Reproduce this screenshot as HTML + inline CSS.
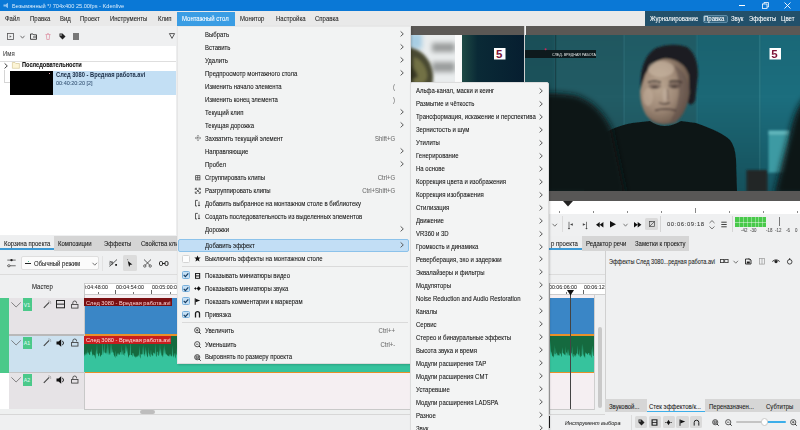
<!DOCTYPE html>
<html><head><meta charset="utf-8">
<style>
*{box-sizing:border-box;margin:0;padding:0}
html,body{width:800px;height:430px;overflow:hidden;background:#eff0f1;font-family:"Liberation Sans",sans-serif;font-size:6px;color:#1f1f1f}
.a{position:absolute}
.t{position:absolute;white-space:nowrap;line-height:8px;height:8px;-webkit-text-stroke:0.08px currentColor}
.m{font-family:"Liberation Mono",monospace}
svg{position:absolute;overflow:visible}
</style></head><body>

<div class="a" style="left:0px;top:0px;width:800px;height:11px;background:#0a78d6"></div>
<svg style="left:3px;top:2px;" width="6" height="7" viewBox="0 0 6 7"><path d="M5 0.8 L1.2 3.5 L5 6.2 Z" fill="#8ec2f0"/><rect x="0.5" y="2.5" width="1.6" height="2" fill="#8ec2f0"/></svg>
<div class="t" style="left:12px;top:2.21px;font-size:6.21px;transform:scaleX(0.91);transform-origin:0 0;color:#dcedfb;-webkit-text-stroke:0">Безымянный */ 704x400 25.00fps - Kdenlive</div>
<div class="a" style="left:739px;top:5px;width:6px;height:0.8px;background:#fff"></div>
<svg style="left:761.5px;top:2px;" width="7" height="7" viewBox="0 0 7 7"><rect x="0.5" y="2" width="4.5" height="4.5" fill="none" stroke="#fff" stroke-width="0.8"/><path d="M2 2 V0.5 H6.5 V5 H5" fill="none" stroke="#fff" stroke-width="0.8"/></svg>
<svg style="left:784px;top:2px;" width="7" height="7" viewBox="0 0 7 7"><path d="M0.5 0.5L6.5 6.5M6.5 0.5L0.5 6.5" stroke="#fff" stroke-width="0.9"/></svg>
<div class="a" style="left:0px;top:11px;width:645px;height:15px;background:#e9e9e9"></div>
<div class="a" style="left:645px;top:11px;width:155px;height:15px;background:#22506a"></div>
<div class="t" style="left:5px;top:15.02px;font-size:6.59px;transform:scaleX(0.91);transform-origin:0 0;">Файл</div>
<div class="t" style="left:29.7px;top:15.02px;font-size:6.59px;transform:scaleX(0.91);transform-origin:0 0;">Правка</div>
<div class="t" style="left:59.7px;top:15.02px;font-size:6.59px;transform:scaleX(0.91);transform-origin:0 0;">Вид</div>
<div class="t" style="left:80px;top:15.02px;font-size:6.59px;transform:scaleX(0.91);transform-origin:0 0;">Проект</div>
<div class="t" style="left:109.7px;top:15.02px;font-size:6.59px;transform:scaleX(0.91);transform-origin:0 0;">Инструменты</div>
<div class="t" style="left:157.7px;top:15.02px;font-size:6.59px;transform:scaleX(0.91);transform-origin:0 0;">Клип</div>
<div class="t" style="left:240.3px;top:15.02px;font-size:6.59px;transform:scaleX(0.91);transform-origin:0 0;">Монитор</div>
<div class="t" style="left:275.6px;top:15.02px;font-size:6.59px;transform:scaleX(0.91);transform-origin:0 0;">Настройка</div>
<div class="t" style="left:314.6px;top:15.02px;font-size:6.59px;transform:scaleX(0.91);transform-origin:0 0;">Справка</div>
<div class="a" style="left:176.5px;top:12px;width:58px;height:14px;background:#3a9de4"></div>
<div class="t" style="left:182px;top:15.02px;font-size:6.59px;transform:scaleX(0.91);transform-origin:0 0;color:#fff">Монтажный стол</div>
<div class="t" style="left:650px;top:15.02px;font-size:6.59px;transform:scaleX(0.91);transform-origin:0 0;color:#fff">Журналирование</div>
<div class="a" style="left:703px;top:14.8px;width:24.5px;height:8.2px;background:#35647e;border:0.7px solid #5d8ca6;border-radius:2px"></div>
<div class="t" style="left:704px;top:15.02px;font-size:6.59px;transform:scaleX(0.91);transform-origin:0 0;color:#fff">Правка</div>
<div class="t" style="left:731px;top:15.02px;font-size:6.59px;transform:scaleX(0.91);transform-origin:0 0;color:#fff">Звук</div>
<div class="t" style="left:749px;top:15.02px;font-size:6.59px;transform:scaleX(0.91);transform-origin:0 0;color:#fff">Эффекты</div>
<div class="t" style="left:781px;top:15.02px;font-size:6.59px;transform:scaleX(0.91);transform-origin:0 0;color:#fff">Цвет</div>
<div class="a" style="left:0px;top:26px;width:176px;height:20px;background:#eff0f1"></div>
<svg style="left:7px;top:33px;" width="7" height="7" viewBox="0 0 7 7"><rect x="0.5" y="0.5" width="6" height="6" fill="none" stroke="#555" stroke-width="0.8"/><path d="M2.6 2.2 V4.8 L4.6 3.5 Z" fill="#666"/></svg>
<svg style="left:19.5px;top:34.5px;" width="5" height="4" viewBox="0 0 5 4"><path d="M0.5 0.8 L2.5 3.2 L4.5 0.8" fill="none" stroke="#555" stroke-width="0.8"/></svg>
<svg style="left:30px;top:33px;" width="7" height="7" viewBox="0 0 7 7"><path d="M0.5 1 H3 L3.8 1.8 H6.5 V6.3 H0.5 Z" fill="none" stroke="#333" stroke-width="0.9"/><path d="M3 4 H6" stroke="#333" stroke-width="0.9"/></svg>
<svg style="left:45px;top:33px;" width="6" height="7" viewBox="0 0 6 7"><path d="M0.5 1.5 H5.5 M1.3 1.5 L1.8 6.5 H4.2 L4.7 1.5 M2.2 0.5 H3.8" fill="none" stroke="#dd8ea0" stroke-width="0.7"/></svg>
<svg style="left:59px;top:33px;" width="7" height="7" viewBox="0 0 7 7"><path d="M0.5 0.5 H3.5 L6.5 3.5 L3.5 6.5 L0.5 3.5 Z" fill="#222"/><circle cx="2" cy="2" r="0.7" fill="#fff"/></svg>
<div class="a" style="left:73px;top:33px;width:6px;height:7px;background:#777"></div>
<svg style="left:168.5px;top:33px;" width="6" height="6" viewBox="0 0 6 6"><path d="M0.4 0.6 H5.6 L3 5.4 Z" fill="none" stroke="#333" stroke-width="0.8" stroke-linejoin="round"/></svg>
<div class="a" style="left:0px;top:46px;width:176px;height:189px;background:#fff"></div>
<div class="t" style="left:3px;top:50.02px;font-size:6.59px;transform:scaleX(0.91);transform-origin:0 0;color:#444">Имя</div>
<div class="a" style="left:0px;top:60.5px;width:176px;height:0.8px;background:#dedede"></div>
<svg style="left:3.5px;top:62.5px;" width="4" height="6" viewBox="0 0 4 6"><path d="M0.6 0.4 L3.3 2.9 L0.6 5.4" fill="none" stroke="#444" stroke-width="1"/></svg>
<svg style="left:11.5px;top:61.8px;" width="8" height="7" viewBox="0 0 8 7"><path d="M0.4 0.5 H3 L3.8 1.5 H7.4 V6.3 H0.4 Z" fill="#fdf5d6" stroke="#cfc08a" stroke-width="0.6"/></svg>
<div class="t" style="left:21.5px;top:61.43px;font-size:6.89px;transform:scaleX(0.82);transform-origin:0 0;font-weight:bold;color:#111;-webkit-text-stroke:0.1px #111">Последовательности</div>
<div class="a" style="left:4px;top:70px;width:0.8px;height:12px;background:#d5d5d5"></div>
<div class="a" style="left:4px;top:82px;width:6px;height:0.8px;background:#d5d5d5"></div>
<div class="a" style="left:10px;top:70.7px;width:43.2px;height:24.5px;background:#000"></div>
<div class="a" style="left:49px;top:72.5px;width:1.2px;height:1.2px;background:#e8a0b0"></div>
<div class="a" style="left:53.2px;top:70.7px;width:122.8px;height:24.5px;background:#c3dff4"></div>
<div class="t" style="left:55.5px;top:71.24px;font-size:7.01px;transform:scaleX(0.82);transform-origin:0 0;font-weight:bold;color:#1b2d45;-webkit-text-stroke:0">След 3080 - Вредная работа.avi</div>
<div class="t" style="left:55.5px;top:79.21px;font-size:6.04px;transform:scaleX(0.91);transform-origin:0 0;color:#3a5878">00:40:20:20 [2]</div>
<div class="a" style="left:176px;top:26px;width:234px;height:209px;background:#eff0f1"></div>
<div class="a" style="left:410px;top:26px;width:114px;height:9px;background:#5b5855"></div>
<div class="a" style="left:526px;top:26px;width:274px;height:9px;background:#5b5855"></div>
<svg style="left:410px;top:35px;overflow:hidden" width="114" height="156" viewBox="0 0 114 156">
<defs>
<filter id="b1" x="-50%" y="-50%" width="200%" height="200%"><feGaussianBlur stdDeviation="1.5"/></filter>
<filter id="b2" x="-50%" y="-50%" width="200%" height="200%"><feGaussianBlur stdDeviation="2.5"/></filter>
<linearGradient id="cg1" x1="0" x2="1" y1="0" y2="0"><stop offset="0" stop-color="#1f4a45"/><stop offset="0.25" stop-color="#0a2a36"/><stop offset="1" stop-color="#061e30"/></linearGradient>
</defs>
<rect x="0" y="0" width="114" height="156" fill="#061e30"/>
<rect x="52" y="0" width="62" height="156" fill="url(#cg1)"/>
<rect x="0" y="0" width="52" height="156" fill="#e9eced"/>
<g filter="url(#b2)">
<rect x="22" y="8" width="23" height="9" fill="#9a9c9c"/>
<rect x="22" y="27" width="23" height="10" fill="#9a9c9c"/>
<rect x="22" y="55" width="23" height="10" fill="#9a9c9c"/>
<rect x="-2" y="-2" width="14" height="16" fill="#a7cde3"/>
</g>
<rect x="45" y="0" width="7" height="156" fill="#fbfbfb"/>
<g filter="url(#b1)">
<path d="M-4 12 Q12 13 20 28 Q25 40 22 50 L-4 50 Z" fill="#4a4a30"/>
<path d="M4 22 Q14 26 17 38 Q18 46 12 48 L4 48 Z" fill="#7c7a4a" opacity="0.8"/>
<path d="M-2 30 Q6 32 8 42 L-2 46 Z" fill="#2e2e1e" opacity="0.8"/>
</g>
<rect x="84" y="13" width="11.5" height="11.5" fill="#fff"/>
<text x="86" y="23" font-family="Liberation Sans" font-weight="bold" font-size="11.5" fill="#7d1438">5</text>
</svg>
<svg style="left:524px;top:35px;overflow:hidden" width="276" height="156" viewBox="0 0 276 156">
<defs>
<filter id="f05" x="-50%" y="-50%" width="200%" height="200%"><feGaussianBlur stdDeviation="0.5"/></filter>
<filter id="f1" x="-50%" y="-50%" width="200%" height="200%"><feGaussianBlur stdDeviation="1.1"/></filter>
<filter id="f2" x="-50%" y="-50%" width="200%" height="200%"><feGaussianBlur stdDeviation="1.6"/></filter>
<filter id="f3" x="-50%" y="-50%" width="200%" height="200%"><feGaussianBlur stdDeviation="3"/></filter>
<filter id="f6" x="-50%" y="-50%" width="200%" height="200%"><feGaussianBlur stdDeviation="5"/></filter>
<linearGradient id="bgv" x1="0" x2="0" y1="0" y2="1"><stop offset="0" stop-color="#000" stop-opacity="0.05"/><stop offset="0.4" stop-color="#000" stop-opacity="0"/><stop offset="1" stop-color="#000" stop-opacity="0.22"/></linearGradient>
<radialGradient id="face" cx="0.38" cy="0.42" r="0.7"><stop offset="0" stop-color="#bba792"/><stop offset="0.5" stop-color="#a08a78"/><stop offset="0.85" stop-color="#736052"/><stop offset="1" stop-color="#4c423b"/></radialGradient>
</defs>
<rect width="276" height="156" fill="#235e68"/>
<g filter="url(#f2)">
<rect x="-5" y="-5" width="35" height="170" fill="#1f525b"/>
<rect x="30" y="-5" width="70" height="170" fill="#225b65"/>
<rect x="100" y="-5" width="73" height="170" fill="#22606b"/>
<rect x="173" y="-5" width="63" height="170" fill="#1d6776"/>
<rect x="236" y="-5" width="45" height="170" fill="#1f6e7e"/>
</g>
<g filter="url(#f05)">
<rect x="99.5" y="0" width="1.2" height="156" fill="#2d737c" opacity="0.8"/>
<rect x="172.5" y="0" width="1.2" height="156" fill="#2a7480" opacity="0.8"/>
<rect x="235" y="0" width="1.5" height="156" fill="#2c7a86" opacity="0.9"/>
<rect x="31" y="0" width="1.2" height="156" fill="#173f46" opacity="0.8"/>
</g>
<rect width="276" height="156" fill="url(#bgv)"/>
<g filter="url(#f1)">
<path d="M117 58 Q114 24 132 13 Q148 7 163 12 Q174 20 174 40 L171 66 Q167 72 164 68 L163 42 Q158 28 142 26 Q128 28 122 42 L121 60 Z" fill="#1b1f21"/>
<path d="M121 40 Q128 25 142 23.5 Q160 25 165 40 L165.5 58 Q163.5 74 156 83 Q148 90 139 89.5 Q128 88 122 80 Q116 70 116 56 Z" fill="url(#face)"/>
<path d="M150 30 Q165 38 165.5 58 Q163.5 74 156 83 Q150 88 145 89 Q156 70 155 50 Q154 38 150 30 Z" fill="#5e4e48" opacity="0.55"/>
<ellipse cx="137" cy="34" rx="13" ry="8" fill="#cdbba8" opacity="0.55"/>
<ellipse cx="124" cy="62" rx="5" ry="9" fill="#c6b19e" opacity="0.5"/>
<ellipse cx="141" cy="60" rx="2.5" ry="7" fill="#c9b7a8" opacity="0.5"/>
<ellipse cx="131" cy="51" rx="6.5" ry="3.2" fill="#5a4843" opacity="0.45"/>
<ellipse cx="150.5" cy="50.5" rx="6.5" ry="3.2" fill="#4e3e3a" opacity="0.5"/>
<path d="M124 47.5 Q130.5 44.5 137 47.5" fill="none" stroke="#2f2725" stroke-width="1.5"/>
<path d="M145 47 Q151 44.5 158 47.5" fill="none" stroke="#2f2725" stroke-width="1.5"/>
<path d="M127 52 Q131 50.5 135 52 Q131 53.6 127 52.3 Z" fill="#2e2422"/>
<path d="M146.5 51.5 Q150.5 50 154.5 51.5 Q150.5 53.3 146.5 51.8 Z" fill="#2e2422"/>
<path d="M143.5 54 L144 65" fill="none" stroke="#6a5650" stroke-width="1.2" opacity="0.7"/>
<path d="M135 67.5 Q140 70.5 146 67.5" fill="none" stroke="#4e3e3a" stroke-width="1.4" opacity="0.9"/>
<path d="M131 75.5 Q141 72.5 152 75.5" fill="none" stroke="#453632" stroke-width="1.6"/>
<path d="M125 82 Q139 92 155 82 L153 89 L127 89 Z" fill="#6a5a53" opacity="0.45"/>
</g>
<g filter="url(#f05)">
<path d="M60 156 L66 112 Q80 93 108 88 L126 86 Q140 96 157 86 L172 88 Q198 97 206 105 Q211 111 212 124 L213 156 Z" fill="#0f1818"/>
</g>
<g filter="url(#f1)">
<rect x="244.5" y="95.6" width="21" height="42" fill="#3c9aa3"/>
<rect x="244.5" y="95.6" width="21" height="4" fill="#62b6bc"/>
<rect x="222.5" y="135" width="21" height="22" fill="#242727"/>
</g>
<g filter="url(#f3)">
<path d="M-12 160 L-12 62 Q20 55 50 60 Q74 66 88 94 L102 160 Z" fill="#0b1313"/>
</g>
<g filter="url(#f3)">
<path d="M290 55 Q272 66 266 98 L260 120 L250 160 L290 160 Z" fill="#0b1313"/>
</g>
<rect x="1" y="15" width="71" height="8" fill="#0d1618" opacity="0.92"/>
<circle cx="21.6" cy="14.2" r="1" fill="#c8285a"/>
<text x="28" y="21" font-family="Liberation Sans" font-size="3.6" fill="#e6e9e9">СЛЕД. ВРЕДНАЯ РАБОТА</text>
<rect x="245.5" y="13" width="11.5" height="11.5" fill="#fff"/>
<text x="247.3" y="23.2" font-family="Liberation Sans" font-weight="bold" font-size="11.5" fill="#7d1438">5</text>
</svg>
<div class="a" style="left:523.7px;top:26px;width:1.8px;height:165px;background:#cfcfcf"></div>
<div class="a" style="left:410px;top:191px;width:390px;height:10px;background:#585756"></div>
<div class="a" style="left:410px;top:201px;width:390px;height:13px;background:#fff"></div>
<svg style="left:562.5px;top:201px;" width="10" height="6" viewBox="0 0 10 6"><path d="M0 0 H10 L5 5.5 Z" fill="#222"/></svg>
<div class="a" style="left:559px;top:211px;width:0.8px;height:2px;background:#888"></div>
<div class="a" style="left:627px;top:211px;width:0.8px;height:2px;background:#888"></div>
<div class="a" style="left:661px;top:211px;width:0.8px;height:2px;background:#888"></div>
<div class="a" style="left:729px;top:211px;width:0.8px;height:2px;background:#888"></div>
<div class="a" style="left:763px;top:211px;width:0.8px;height:2px;background:#888"></div>
<div class="a" style="left:797px;top:211px;width:0.8px;height:2px;background:#888"></div>
<div class="a" style="left:593px;top:211px;width:0.8px;height:2px;background:#888"></div>
<div class="a" style="left:695px;top:208px;width:0.8px;height:5px;background:#888"></div>
<div class="a" style="left:410px;top:214px;width:390px;height:21px;background:#eff0f1"></div>
<div class="a" style="left:0px;top:235.7px;width:800px;height:15.5px;background:#d5d5d5"></div>
<div class="a" style="left:0px;top:235.7px;width:54.4px;height:15.5px;background:#eeeff0"></div>
<div class="a" style="left:0px;top:247.9px;width:54.4px;height:2px;background:#3d9ad5"></div>
<div class="t" style="left:4px;top:239.72px;font-size:6.59px;transform:scaleX(0.91);transform-origin:0 0;color:#1a1a1a">Корзина проекта</div>
<div class="t" style="left:58px;top:239.72px;font-size:6.59px;transform:scaleX(0.91);transform-origin:0 0;color:#1a1a1a">Композиции</div>
<div class="t" style="left:104px;top:239.72px;font-size:6.59px;transform:scaleX(0.91);transform-origin:0 0;color:#1a1a1a">Эффекты</div>
<div class="t" style="left:141px;top:239.72px;font-size:6.59px;transform:scaleX(0.91);transform-origin:0 0;color:#1a1a1a">Свойства клипа</div>
<div class="a" style="left:0px;top:251.2px;width:605px;height:31.8px;background:#eff0f1"></div>
<div class="a" style="left:549px;top:235.7px;width:32.5px;height:15.5px;background:#eeeff0"></div>
<div class="a" style="left:549px;top:247.9px;width:32.5px;height:2px;background:#3d9ad5"></div>
<div class="a" style="left:0px;top:283px;width:84px;height:15px;background:#eff0f1"></div>
<div class="t" style="left:31.5px;top:282.92px;font-size:6.59px;transform:scaleX(0.91);transform-origin:0 0;">Мастер</div>
<div class="a" style="left:84px;top:283px;width:510px;height:11.3px;background:#fff"></div>
<div class="a" style="left:0px;top:298px;width:9px;height:75px;background:#4bc98a"></div>
<div class="a" style="left:9px;top:298px;width:75px;height:36px;background:#e6e3e6"></div>
<div class="a" style="left:9px;top:334px;width:75px;height:2px;background:#b9b9b9"></div>
<div class="a" style="left:9px;top:336px;width:75px;height:37px;background:#cce1ef"></div>
<div class="a" style="left:9px;top:373px;width:75px;height:36px;background:#e6e3e6"></div>
<div class="a" style="left:0px;top:373px;width:9px;height:36px;background:#fff"></div>
<div class="a" style="left:9px;top:372.4px;width:75px;height:0.8px;background:#c4c4c4"></div>
<div class="a" style="left:84px;top:295px;width:510px;height:114.2px;background:#f5eff2"></div>
<div class="a" style="left:84px;top:298px;width:510px;height:36px;background:#3a86c6"></div>
<div class="a" style="left:84px;top:334px;width:510px;height:2px;background:#e8902a"></div>
<div class="a" style="left:84px;top:336px;width:510px;height:36px;background:#39c29a"></div>
<div class="a" style="left:84px;top:336px;width:510px;height:14px;background:#1d6a42"></div>
<div class="a" style="left:84px;top:372px;width:510px;height:1px;background:#e8902a"></div>
<div class="a" style="left:0px;top:409px;width:605px;height:5px;background:#eef0f0"></div>
<div class="a" style="left:84px;top:408.8px;width:510.5px;height:0.7px;background:#c9c9c9"></div>
<div class="a" style="left:594px;top:283px;width:0.7px;height:126.5px;background:#cfcfcf"></div>
<div class="a" style="left:605px;top:249px;width:195px;height:150px;background:#eff0f1"></div>
<div class="a" style="left:605px;top:249px;width:1px;height:150px;background:#d0d0d0"></div>
<div class="t" style="left:609px;top:257.72px;font-size:6.59px;transform:scaleX(0.85);transform-origin:0 0;color:#222">Эффекты След 3080...редная работа.avi</div>
<div class="a" style="left:0px;top:414px;width:800px;height:16px;background:#eff0f1"></div>
<div class="t" style="left:564.5px;top:419.21px;font-size:6.10px;transform:scaleX(0.91);transform-origin:0 0;font-style:italic;color:#333">Инструмент выбора</div>
<div class="a" style="left:631.3px;top:415px;width:0.7px;height:15px;background:#dcdcdc"></div>
<div class="a" style="left:634.7px;top:416.2px;width:12.2px;height:12.3px;background:#dadada;border-radius:1.5px"></div>
<div class="a" style="left:648.6px;top:416.2px;width:12.2px;height:12.3px;background:#dadada;border-radius:1.5px"></div>
<div class="a" style="left:662.5px;top:416.2px;width:12.2px;height:12.3px;background:#dadada;border-radius:1.5px"></div>
<div class="a" style="left:676.4000000000001px;top:416.2px;width:12.2px;height:12.3px;background:#dadada;border-radius:1.5px"></div>
<div class="a" style="left:690.3000000000001px;top:416.2px;width:12.2px;height:12.3px;background:#dadada;border-radius:1.5px"></div>
<svg style="left:637.5px;top:419px;" width="7" height="7" viewBox="0 0 7 7"><path d="M0.5 0.5 H3.5 L6.5 3.5 L3.5 6.5 L0.5 3.5 Z" fill="#222"/><circle cx="2" cy="2" r="0.7" fill="#fff"/></svg>
<svg style="left:651px;top:419px;" width="7" height="7" viewBox="0 0 7 7"><rect x="0.5" y="0.3" width="6" height="6.4" fill="#222"/><rect x="1.7" y="1.3" width="3.6" height="1.8" fill="#dadada"/><rect x="1.7" y="3.9" width="3.6" height="1.8" fill="#dadada"/></svg>
<svg style="left:665px;top:419px;" width="7" height="7" viewBox="0 0 7 7"><path d="M0.3 3.5 H1.5 M5.5 3.5 H6.7" stroke="#111" stroke-width="0.9"/><path d="M3.5 0.8 L5.2 3.5 L3.5 6.2 L1.8 3.5 Z" fill="#111"/></svg>
<svg style="left:679px;top:419px;" width="7" height="7" viewBox="0 0 7 7"><path d="M1 0.4 V6.8" stroke="#111" stroke-width="0.9"/><path d="M1.3 0.8 L6.2 2.5 L1.3 4.4 Z" fill="#111"/></svg>
<svg style="left:692.5px;top:419px;" width="7" height="7" viewBox="0 0 7 7"><path d="M1.2 6.6 V3.5 A2.3 2.3 0 0 1 5.8 3.5 V6.6" fill="none" stroke="#222" stroke-width="1"/></svg>
<svg style="left:711.5px;top:418.5px;" width="7" height="7" viewBox="0 0 7 7"><circle cx="3.2" cy="3.2" r="2.6" fill="none" stroke="#333" stroke-width="0.8"/><path d="M5 5 L6.7 6.7" stroke="#333" stroke-width="1"/><path d="M2 3.2 H4.4" stroke="#333" stroke-width="0.7"/><rect x="2" y="2" width="2.4" height="2.4" fill="none" stroke="#333" stroke-width="0.6"/></svg>
<svg style="left:724.5px;top:418.5px;" width="7" height="7" viewBox="0 0 7 7"><circle cx="3.2" cy="3.2" r="2.6" fill="none" stroke="#333" stroke-width="0.8"/><path d="M5 5 L6.7 6.7" stroke="#333" stroke-width="1"/><path d="M2 3.2 H4.4" stroke="#333" stroke-width="0.7"/></svg>
<svg style="left:789.5px;top:418.5px;" width="7" height="7" viewBox="0 0 7 7"><circle cx="3.2" cy="3.2" r="2.6" fill="none" stroke="#333" stroke-width="0.8"/><path d="M5 5 L6.7 6.7" stroke="#333" stroke-width="1"/><path d="M2 3.2 H4.4" stroke="#333" stroke-width="0.7"/><path d="M3.2 2 V4.4" stroke="#333" stroke-width="0.7"/></svg>
<div class="a" style="left:736px;top:421.3px;width:28px;height:1.5px;background:#c4c4c4;border-radius:1px"></div>
<div class="a" style="left:764px;top:421.3px;width:21.5px;height:1.5px;background:#3daee9;border-radius:1px"></div>
<div class="a" style="left:760.5px;top:418px;width:7.5px;height:7.5px;border-radius:50%;background:#fff;border:0.6px solid #c8c8c8"></div>
<div class="a" style="left:0px;top:274px;width:605px;height:0.8px;background:#dcdcdc"></div>
<svg style="left:7px;top:258px;" width="9" height="9" viewBox="0 0 9 9"><path d="M0.3 2.1 H8.7 M0.3 7.75 H8.7" stroke="#333" stroke-width="0.7"/><circle cx="4.5" cy="2.1" r="1.2" fill="#222"/><circle cx="1.9" cy="7.75" r="1.1" fill="#fff" stroke="#333" stroke-width="0.7"/></svg>
<div class="a" style="left:20.6px;top:256px;width:78.6px;height:14.3px;background:#fbfbfb;border:0.8px solid #dedede;border-radius:2px"></div>
<div class="a" style="left:25px;top:263.3px;width:6px;height:1.2px;background:#222"></div>
<div class="a" style="left:27.5px;top:260.5px;width:1.2px;height:1.2px;background:#3fbf90"></div>
<div class="t" style="left:33.5px;top:259.62px;font-size:6.59px;transform:scaleX(0.91);transform-origin:0 0;color:#222">Обычный режим</div>
<svg style="left:91.75px;top:261.6px;" width="5.5" height="4" viewBox="0 0 5.5 4"><path d="M0.5 0.8 L2.75 3.2 L5.0 0.8" fill="none" stroke="#555" stroke-width="0.8"/></svg>
<div class="a" style="left:101.8px;top:256px;width:0.6px;height:15px;background:#e2e2e2"></div>
<svg style="left:108.6px;top:258.8px;" width="9" height="8" viewBox="0 0 9 8"><path d="M0.5 7.5 L8 0.5" stroke="#333" stroke-width="0.8"/><path d="M1 2.5 V6.5 M3 2 V6 M0.8 2.2 L4.2 4.2" stroke="#333" stroke-width="0.7"/><rect x="6.2" y="5" width="1.8" height="1.8" fill="#222"/></svg>
<div class="a" style="left:122.6px;top:255px;width:14.6px;height:15.8px;background:#dcdcdc;border-radius:1.5px"></div>
<svg style="left:127.3px;top:258.5px;" width="6" height="9" viewBox="0 0 6 9"><path d="M0.6 0.3 V1.2" stroke="#222" stroke-width="0.6"/><path d="M0.8 2 L5.4 5.6 L3.2 5.8 L2.1 8 Z" fill="#111"/></svg>
<svg style="left:142.9px;top:258.8px;" width="9" height="9" viewBox="0 0 9 9"><path d="M1 0.5 L6.8 6.2 M8 0.5 L2.2 6.2" stroke="#333" stroke-width="0.8"/><circle cx="1.8" cy="7" r="1.2" fill="none" stroke="#333" stroke-width="0.7"/><circle cx="7.2" cy="7" r="1.2" fill="none" stroke="#333" stroke-width="0.7"/></svg>
<svg style="left:159.2px;top:261px;" width="9.5" height="5" viewBox="0 0 9.5 5"><rect x="0.5" y="0.5" width="3" height="4" rx="1.2" fill="none" stroke="#222" stroke-width="1"/><rect x="6" y="0.5" width="3" height="4" rx="1.2" fill="none" stroke="#222" stroke-width="1"/><path d="M3.5 2.5 H6" stroke="#222" stroke-width="1"/></svg>
<div class="a" style="left:84px;top:283px;width:521px;height:11.3px;background:#fff"></div>
<div class="a" style="left:84px;top:283px;width:521px;height:0.7px;background:#d0d0d0"></div>
<div class="a" style="left:84px;top:294px;width:521px;height:0.8px;background:#cdcdcd"></div>
<div class="a" style="left:84px;top:283px;width:521px;height:12px;overflow:hidden">
<div class="t" style="left:-4.5px;top:0.10px;font-size:5.82px;transform:scaleX(0.91);transform-origin:0 0;color:#333">00:04:48:00</div>
<div class="t" style="left:31.599999999999994px;top:0.10px;font-size:5.82px;transform:scaleX(0.91);transform-origin:0 0;color:#333">00:04:54:00</div>
<div class="t" style="left:67.5px;top:0.10px;font-size:5.82px;transform:scaleX(0.91);transform-origin:0 0;color:#333">00:05:00:00</div>
<div class="t" style="left:465.20000000000005px;top:0.10px;font-size:5.82px;transform:scaleX(0.91);transform-origin:0 0;color:#333">00:06:06:00</div>
<div class="t" style="left:499.5px;top:0.10px;font-size:5.82px;transform:scaleX(0.91);transform-origin:0 0;color:#333">00:06:12:00</div>
</div>
<div class="a" style="left:115.1px;top:289.5px;width:0.7px;height:4.5px;background:#666"></div>
<div class="a" style="left:151.1px;top:289.5px;width:0.7px;height:4.5px;background:#666"></div>
<div class="a" style="left:187.1px;top:289.5px;width:0.7px;height:4.5px;background:#666"></div>
<div class="a" style="left:583px;top:289.5px;width:0.7px;height:4.5px;background:#666"></div>
<div class="a" style="left:547px;top:289.5px;width:0.7px;height:4.5px;background:#666"></div>
<div class="a" style="left:97.6px;top:292px;width:0.7px;height:2px;background:#777"></div>
<div class="a" style="left:133.3px;top:292px;width:0.7px;height:2px;background:#777"></div>
<div class="a" style="left:169.5px;top:292px;width:0.7px;height:2px;background:#777"></div>
<div class="a" style="left:565.5px;top:292px;width:0.7px;height:2px;background:#777"></div>
<div class="a" style="left:83.5px;top:283px;width:0.8px;height:126px;background:#c8c8c8"></div>
<svg style="left:10.9px;top:301.8px;" width="10.2" height="5.5" viewBox="0 0 10.2 5.5"><path d="M0.4 0.4 L5.1 5 L9.8 0.4" fill="none" stroke="#555" stroke-width="0.7"/></svg>
<div class="a" style="left:22.9px;top:298.3px;width:8.9px;height:12.4px;background:#4bc98a"></div>
<div class="t" style="left:23.8px;top:300.90000000000003px;font-size:5.2px;color:#dff7ea">V1</div>
<svg style="left:42.9px;top:300.1px;" width="8.5" height="8.5" viewBox="0 0 8.5 8.5"><path d="M0.8 7.8 L6.2 2.4" stroke="#444" stroke-width="1.1"/><path d="M6 0.4 V1.6 M7.6 1.3 L6.9 2 M8.2 3 H7" stroke="#666" stroke-width="0.6"/></svg>
<svg style="left:56.3px;top:300.2px;" width="9" height="8.3" viewBox="0 0 9 8.3"><rect x="0.5" y="0.5" width="8" height="7.3" fill="none" stroke="#222" stroke-width="1"/><path d="M0.5 4.15 H8.5" stroke="#222" stroke-width="1"/><path d="M2.3 0.5 V7.8 M6.7 0.5 V7.8" stroke="#222" stroke-width="0.6" opacity="0"/></svg>
<svg style="left:71.4px;top:301.1px;" width="7.6" height="7.4" viewBox="0 0 7.6 7.4"><path d="M1.8 3.2 V1.9 A1.9 1.9 0 0 1 5.6 1.9 V2.4" fill="none" stroke="#333" stroke-width="0.8"/><rect x="0.6" y="3.4" width="6.4" height="3.7" fill="none" stroke="#333" stroke-width="0.8"/></svg>
<svg style="left:10.9px;top:340.1px;" width="10.2" height="5.5" viewBox="0 0 10.2 5.5"><path d="M0.4 0.4 L5.1 5 L9.8 0.4" fill="none" stroke="#555" stroke-width="0.7"/></svg>
<div class="a" style="left:22.9px;top:336.6px;width:8.9px;height:12.4px;background:#4bc98a"></div>
<div class="t" style="left:23.8px;top:339.20000000000005px;font-size:5.2px;color:#dff7ea">A1</div>
<svg style="left:42.9px;top:338.40000000000003px;" width="8.5" height="8.5" viewBox="0 0 8.5 8.5"><path d="M0.8 7.8 L6.2 2.4" stroke="#444" stroke-width="1.1"/><path d="M6 0.4 V1.6 M7.6 1.3 L6.9 2 M8.2 3 H7" stroke="#666" stroke-width="0.6"/></svg>
<svg style="left:56.3px;top:338.6px;" width="9" height="8" viewBox="0 0 9 8"><path d="M0.5 2.6 H2.5 L5.2 0.3 V7.7 L2.5 5.4 H0.5 Z" fill="#111"/><path d="M6.4 1.8 A3 3 0 0 1 6.4 6.2" fill="none" stroke="#111" stroke-width="0.9"/></svg>
<svg style="left:71.4px;top:339.40000000000003px;" width="7.6" height="7.4" viewBox="0 0 7.6 7.4"><path d="M1.8 3.2 V1.9 A1.9 1.9 0 0 1 5.6 1.9 V2.4" fill="none" stroke="#333" stroke-width="0.8"/><rect x="0.6" y="3.4" width="6.4" height="3.7" fill="none" stroke="#333" stroke-width="0.8"/></svg>
<svg style="left:10.9px;top:377.0px;" width="10.2" height="5.5" viewBox="0 0 10.2 5.5"><path d="M0.4 0.4 L5.1 5 L9.8 0.4" fill="none" stroke="#555" stroke-width="0.7"/></svg>
<div class="a" style="left:22.9px;top:373.5px;width:8.9px;height:12.4px;background:#4bc98a"></div>
<div class="t" style="left:23.8px;top:376.1px;font-size:5.2px;color:#dff7ea">A2</div>
<svg style="left:42.9px;top:375.3px;" width="8.5" height="8.5" viewBox="0 0 8.5 8.5"><path d="M0.8 7.8 L6.2 2.4" stroke="#444" stroke-width="1.1"/><path d="M6 0.4 V1.6 M7.6 1.3 L6.9 2 M8.2 3 H7" stroke="#666" stroke-width="0.6"/></svg>
<svg style="left:56.3px;top:375.5px;" width="9" height="8" viewBox="0 0 9 8"><path d="M0.5 2.6 H2.5 L5.2 0.3 V7.7 L2.5 5.4 H0.5 Z" fill="#111"/><path d="M6.4 1.8 A3 3 0 0 1 6.4 6.2" fill="none" stroke="#111" stroke-width="0.9"/></svg>
<svg style="left:71.4px;top:376.3px;" width="7.6" height="7.4" viewBox="0 0 7.6 7.4"><path d="M1.8 3.2 V1.9 A1.9 1.9 0 0 1 5.6 1.9 V2.4" fill="none" stroke="#333" stroke-width="0.8"/><rect x="0.6" y="3.4" width="6.4" height="3.7" fill="none" stroke="#333" stroke-width="0.8"/></svg>
<div class="a" style="left:84px;top:336px;width:510px;height:28px;background:#156a3f"></div>
<svg style="left:0;top:0" width="800" height="430"><path d="M84 372 L84.0 353.8 L84.7 356.5 L84.9 353.8 L85.6 355.6 L85.8 352.4 L86.5 354.3 L86.7 355.5 L87.1 349.0 L87.4 355.5 L87.6 352.0 L88.3 354.0 L88.5 351.7 L89.2 354.6 L89.4 354.8 L90.1 355.2 L90.3 351.6 L91.0 351.8 L91.2 352.5 L91.6 348.2 L91.9 352.5 L92.1 353.8 L92.8 356.3 L93.0 354.1 L93.7 355.6 L93.9 354.8 L94.6 355.6 L94.8 356.5 L95.5 359.0 L95.7 355.0 L96.1 349.2 L96.4 355.0 L96.6 352.9 L97.0 342.8 L97.3 352.9 L97.5 353.5 L98.2 354.7 L98.4 356.3 L99.1 356.3 L99.3 352.5 L100.0 354.0 L100.2 356.4 L100.9 356.6 L101.1 354.6 L101.8 355.5 L102.0 351.9 L102.4 340.2 L102.7 351.9 L102.9 355.3 L103.3 349.3 L103.6 355.3 L103.8 352.0 L104.2 341.6 L104.5 352.0 L104.7 352.4 L105.4 353.7 L105.6 352.5 L106.3 352.8 L106.5 354.7 L106.9 347.4 L107.2 354.7 L107.4 352.6 L107.8 340.8 L108.1 352.6 L108.3 355.5 L108.7 344.4 L109.0 355.5 L109.2 352.6 L109.9 355.1 L110.1 354.7 L110.5 342.8 L110.8 354.7 L111.0 352.6 L111.4 342.4 L111.7 352.6 L111.9 353.1 L112.3 348.6 L112.6 353.1 L112.8 352.0 L113.5 352.7 L113.7 354.5 L114.4 355.9 L114.6 356.3 L115.3 358.0 L115.5 355.8 L115.9 350.6 L116.2 355.8 L116.4 356.0 L117.1 356.8 L117.3 352.4 L118.0 355.3 L118.2 352.5 L118.9 355.1 L119.1 354.5 L119.8 354.8 L120.0 351.7 L120.7 352.4 L120.9 355.0 L121.3 344.4 L121.6 355.0 L121.8 354.5 L122.2 349.1 L122.5 354.5 L122.7 355.1 L123.1 349.3 L123.4 355.1 L123.6 354.3 L124.3 356.1 L124.5 352.9 L125.2 353.5 L125.4 351.6 L125.8 344.0 L126.1 351.6 L126.3 351.8 L126.7 344.9 L127.0 351.8 L127.2 354.4 L127.6 347.5 L127.9 354.4 L128.1 356.0 L128.8 357.9 L129.0 355.0 L129.7 355.4 L129.9 351.7 L130.3 340.4 L130.6 351.7 L130.8 355.0 L131.5 355.1 L131.7 354.7 L132.4 356.9 L132.6 353.1 L133.3 353.3 L133.5 354.2 L134.2 356.9 L134.4 355.2 L135.1 357.6 L135.3 356.1 L136.0 358.1 L136.2 356.0 L136.9 357.3 L137.1 355.5 L137.8 357.2 L138.0 354.6 L138.7 356.4 L138.9 354.5 L139.3 345.4 L139.6 354.5 L139.8 356.5 L140.5 358.7 L140.7 353.4 L141.4 355.2 L141.6 353.7 L142.3 354.0 L142.5 355.3 L142.9 346.4 L143.2 355.3 L143.4 353.9 L143.8 344.3 L144.1 353.9 L144.3 354.0 L145.0 356.7 L145.2 352.8 L145.6 346.4 L145.9 352.8 L146.1 354.9 L146.5 349.5 L146.8 354.9 L147.0 356.0 L147.7 357.4 L147.9 356.0 L148.3 346.6 L148.6 356.0 L148.8 352.5 L149.5 354.9 L149.7 356.1 L150.4 357.2 L150.6 354.4 L151.0 349.3 L151.3 354.4 L151.5 354.0 L152.2 356.5 L152.4 355.1 L153.1 355.9 L153.3 352.3 L154.0 353.2 L154.2 352.6 L154.9 354.4 L155.1 354.0 L155.5 343.3 L155.8 354.0 L156.0 356.4 L156.7 356.6 L156.9 351.7 L157.6 351.8 L157.8 355.0 L158.5 356.0 L158.7 355.5 L159.1 350.4 L159.4 355.5 L159.6 353.8 L160.0 343.1 L160.3 353.8 L160.5 352.7 L160.9 348.3 L161.2 352.7 L161.4 354.6 L162.1 356.5 L162.3 354.8 L163.0 357.7 L163.2 354.9 L163.6 347.1 L163.9 354.9 L164.1 352.4 L164.5 344.6 L164.8 352.4 L165.0 355.1 L165.4 348.9 L165.7 355.1 L165.9 353.2 L166.6 354.8 L166.8 354.6 L167.5 355.8 L167.7 355.5 L168.4 355.7 L168.6 356.2 L169.3 356.6 L169.5 353.8 L170.2 356.5 L170.4 353.4 L171.1 356.0 L171.3 355.5 L172.0 356.9 L172.2 354.8 L172.6 345.0 L172.9 354.8 L173.1 355.6 L173.8 357.7 L174.0 352.6 L174.7 355.5 L174.9 356.4 L175.6 358.8 L175.8 353.1 L176.5 355.7 L176.7 353.2 L177.1 345.7 L177.4 353.2 L177.6 354.3 L178.3 355.7 L178.5 351.6 L179.2 351.8 L179.4 355.5 L179.8 348.8 L180.1 355.5 L180.3 355.4 L180.7 350.3 L181.0 355.4 L181.2 354.1 L181.9 356.6 L182.1 354.9 L182.8 356.4 L183.0 356.2 L183.4 350.5 L183.7 356.2 L183.9 354.1 L184.3 344.3 L184.6 354.1 L184.8 354.7 L185.5 357.2 L185.7 354.3 L186.1 347.3 L186.4 354.3 L186.6 355.7 L187.3 356.4 L187.5 355.8 L188.2 357.3 L188.4 354.4 L188.8 346.1 L189.1 354.4 L189.3 354.0 L190.0 354.1 L190.2 356.3 L190.9 357.5 L191.1 355.5 L191.8 357.0 L192.0 355.0 L192.4 346.6 L192.7 355.0 L192.9 353.6 L193.6 356.3 L193.8 352.8 L194.5 353.2 L194.7 353.7 L195.4 356.4 L195.6 353.9 L196.0 348.4 L196.3 353.9 L196.5 354.6 L197.2 355.0 L197.4 355.4 L197.8 349.8 L198.1 355.4 L198.3 352.6 L199.0 353.6 L199.2 353.3 L199.9 353.6 L200.1 355.2 L200.5 347.1 L200.8 355.2 L201.0 352.8 L201.4 344.5 L201.7 352.8 L201.9 353.7 L202.6 354.9 L202.8 354.1 L203.2 348.5 L203.5 354.1 L203.7 354.7 L204.4 356.2 L204.6 355.8 L205.3 358.3 L205.5 352.7 L206.2 355.1 L206.4 356.0 L206.8 349.5 L207.1 356.0 L207.3 356.1 L207.7 344.1 L208.0 356.1 L208.2 355.9 L208.6 350.0 L208.9 355.9 L209.1 355.1 L209.5 350.4 L209.8 355.1 L210.0 355.7 L210.7 358.0 L210.9 352.1 L211.6 354.2 L211.8 351.6 L212.2 342.1 L212.5 351.6 L212.7 356.1 L213.4 356.4 L213.6 354.0 L214.3 355.5 L214.5 354.9 L214.9 350.4 L215.2 354.9 L215.4 352.0 L215.8 343.6 L216.1 352.0 L216.3 354.1 L217.0 354.5 L217.2 352.4 L217.6 341.7 L217.9 352.4 L218.1 356.5 L218.8 356.7 L219.0 351.8 L219.7 353.2 L219.9 355.3 L220.3 347.6 L220.6 355.3 L220.8 354.1 L221.5 355.9 L221.7 351.6 L222.4 354.1 L222.6 352.4 L223.3 354.6 L223.5 353.5 L223.9 348.2 L224.2 353.5 L224.4 354.1 L224.8 342.9 L225.1 354.1 L225.3 355.5 L226.0 358.1 L226.2 354.6 L226.9 356.4 L227.1 354.0 L227.8 356.4 L228.0 352.8 L228.7 355.0 L228.9 355.4 L229.6 356.6 L229.8 356.0 L230.5 358.1 L230.7 355.3 L231.4 356.6 L231.6 355.1 L232.0 348.4 L232.3 355.1 L232.5 353.8 L232.9 347.0 L233.2 353.8 L233.4 354.7 L234.1 355.4 L234.3 356.2 L235.0 357.2 L235.2 354.8 L235.9 356.4 L236.1 353.4 L236.8 355.4 L237.0 355.0 L237.7 357.9 L237.9 351.6 L238.6 353.8 L238.8 352.8 L239.5 352.9 L239.7 352.5 L240.4 352.8 L240.6 352.8 L241.3 354.4 L241.5 354.0 L242.2 355.7 L242.4 356.5 L243.1 358.9 L243.3 351.9 L244.0 354.2 L244.2 351.7 L244.9 352.2 L245.1 353.9 L245.5 345.9 L245.8 353.9 L246.0 354.6 L246.4 343.0 L246.7 354.6 L246.9 353.6 L247.6 355.4 L247.8 353.3 L248.2 344.1 L248.5 353.3 L248.7 354.3 L249.1 344.6 L249.4 354.3 L249.6 353.0 L250.0 347.0 L250.3 353.0 L250.5 351.7 L250.9 341.7 L251.2 351.7 L251.4 353.4 L252.1 355.7 L252.3 351.8 L253.0 354.6 L253.2 351.9 L253.9 353.2 L254.1 353.9 L254.8 354.6 L255.0 354.1 L255.7 356.3 L255.9 353.8 L256.6 356.3 L256.8 354.5 L257.2 345.5 L257.5 354.5 L257.7 353.8 L258.1 349.4 L258.4 353.8 L258.6 354.1 L259.0 346.6 L259.3 354.1 L259.5 354.8 L260.2 355.6 L260.4 354.4 L261.1 356.7 L261.3 354.2 L262.0 357.0 L262.2 355.2 L262.6 350.3 L262.9 355.2 L263.1 356.0 L263.8 357.8 L264.0 353.3 L264.4 343.8 L264.7 353.3 L264.9 354.3 L265.6 356.2 L265.8 355.3 L266.2 349.3 L266.5 355.3 L266.7 356.4 L267.4 359.0 L267.6 351.7 L268.0 345.5 L268.3 351.7 L268.5 353.6 L269.2 353.9 L269.4 354.2 L269.8 349.5 L270.1 354.2 L270.3 354.9 L271.0 356.8 L271.2 353.4 L271.9 354.0 L272.1 353.2 L272.8 355.7 L273.0 351.9 L273.4 341.4 L273.7 351.9 L273.9 354.6 L274.6 355.3 L274.8 353.6 L275.2 343.1 L275.5 353.6 L275.7 353.3 L276.4 356.3 L276.6 353.1 L277.3 355.4 L277.5 356.1 L278.2 357.2 L278.4 352.0 L279.1 352.2 L279.3 351.9 L280.0 353.4 L280.2 354.9 L280.6 344.7 L280.9 354.9 L281.1 351.9 L281.5 342.6 L281.8 351.9 L282.0 351.9 L282.4 342.1 L282.7 351.9 L282.9 355.0 L283.3 349.8 L283.6 355.0 L283.8 353.3 L284.5 354.4 L284.7 352.1 L285.4 353.8 L285.6 356.1 L286.3 358.8 L286.5 353.7 L287.2 354.6 L287.4 353.1 L288.1 355.9 L288.3 356.0 L288.7 349.1 L289.0 356.0 L289.2 353.3 L289.9 354.5 L290.1 353.4 L290.5 344.9 L290.8 353.4 L291.0 355.5 L291.7 358.0 L291.9 354.3 L292.3 344.2 L292.6 354.3 L292.8 355.9 L293.2 351.7 L293.5 355.9 L293.7 354.1 L294.4 355.8 L294.6 356.3 L295.3 358.7 L295.5 351.8 L296.2 354.2 L296.4 351.9 L296.8 342.0 L297.1 351.9 L297.3 356.0 L297.7 346.9 L298.0 356.0 L298.2 352.2 L298.9 354.2 L299.1 352.7 L299.5 342.6 L299.8 352.7 L300.0 354.1 L300.7 355.3 L300.9 353.2 L301.6 355.2 L301.8 354.0 L302.5 356.1 L302.7 355.0 L303.4 356.3 L303.6 355.6 L304.3 358.2 L304.5 355.5 L305.2 358.2 L305.4 356.3 L306.1 357.9 L306.3 355.1 L307.0 356.3 L307.2 353.6 L307.5 343.7 L307.9 353.6 L308.1 356.5 L308.8 357.0 L309.0 352.5 L309.7 353.4 L309.9 356.3 L310.2 349.9 L310.6 356.3 L310.8 352.1 L311.5 354.4 L311.7 352.4 L312.0 344.7 L312.4 352.4 L312.6 354.4 L313.3 354.5 L313.5 352.0 L313.8 346.3 L314.2 352.0 L314.4 352.7 L315.1 354.5 L315.3 352.6 L315.6 346.4 L316.0 352.6 L316.2 352.4 L316.9 353.3 L317.1 354.2 L317.8 355.7 L318.0 352.8 L318.7 355.5 L318.9 353.2 L319.6 356.1 L319.8 353.9 L320.1 349.5 L320.5 353.9 L320.7 356.2 L321.4 357.4 L321.6 354.1 L322.3 355.0 L322.5 356.5 L323.2 357.2 L323.4 351.6 L324.1 352.7 L324.3 355.5 L325.0 357.3 L325.2 352.3 L325.5 345.7 L325.9 352.3 L326.1 352.8 L326.8 354.3 L327.0 354.7 L327.7 355.5 L327.9 354.2 L328.2 344.0 L328.6 354.2 L328.8 351.5 L329.5 354.0 L329.7 355.6 L330.0 349.5 L330.4 355.6 L330.6 355.1 L330.9 347.2 L331.3 355.1 L331.5 353.8 L332.2 355.6 L332.4 355.8 L332.7 345.5 L333.1 355.8 L333.3 353.6 L334.0 353.9 L334.2 355.6 L334.5 347.3 L334.9 355.6 L335.1 354.1 L335.4 343.5 L335.8 354.1 L336.0 353.1 L336.3 348.4 L336.7 353.1 L336.9 353.0 L337.6 355.2 L337.8 353.3 L338.5 353.6 L338.7 353.5 L339.4 356.4 L339.6 355.6 L340.3 355.7 L340.5 353.4 L341.2 354.1 L341.4 354.3 L342.1 354.4 L342.3 356.5 L343.0 357.1 L343.2 354.6 L343.5 347.6 L343.9 354.6 L344.1 354.2 L344.4 347.5 L344.8 354.2 L345.0 353.5 L345.7 354.2 L345.9 352.5 L346.6 353.5 L346.8 356.2 L347.5 358.4 L347.7 353.2 L348.4 353.4 L348.6 352.2 L348.9 342.8 L349.3 352.2 L349.5 355.0 L349.8 347.8 L350.2 355.0 L350.4 355.7 L351.1 356.0 L351.3 352.6 L351.6 347.6 L352.0 352.6 L352.2 353.5 L352.5 342.2 L352.9 353.5 L353.1 353.6 L353.8 355.6 L354.0 355.3 L354.7 356.5 L354.9 353.2 L355.6 353.2 L355.8 353.5 L356.5 356.4 L356.7 355.4 L357.4 357.3 L357.6 351.6 L357.9 344.9 L358.3 351.6 L358.5 354.8 L358.8 347.7 L359.2 354.8 L359.4 354.0 L360.1 356.5 L360.3 354.6 L360.6 344.4 L361.0 354.6 L361.2 356.0 L361.9 357.1 L362.1 354.0 L362.4 344.3 L362.8 354.0 L363.0 356.4 L363.7 358.6 L363.9 355.7 L364.2 344.1 L364.6 355.7 L364.8 354.6 L365.1 350.0 L365.5 354.6 L365.7 352.7 L366.4 354.8 L366.6 353.1 L367.3 354.2 L367.5 353.8 L367.8 342.0 L368.2 353.8 L368.4 352.2 L369.1 353.8 L369.3 354.3 L370.0 355.1 L370.2 356.0 L370.9 358.5 L371.1 354.5 L371.4 343.9 L371.8 354.5 L372.0 352.9 L372.7 353.7 L372.9 354.4 L373.6 354.9 L373.8 354.2 L374.1 350.0 L374.5 354.2 L374.7 352.4 L375.4 355.2 L375.6 354.8 L375.9 345.4 L376.3 354.8 L376.5 355.2 L377.2 357.0 L377.4 355.5 L377.7 349.9 L378.1 355.5 L378.3 353.8 L378.6 346.7 L379.0 353.8 L379.2 354.3 L379.5 346.2 L379.9 354.3 L380.1 352.8 L380.8 353.8 L381.0 354.7 L381.3 345.3 L381.7 354.7 L381.9 352.2 L382.6 354.0 L382.8 353.8 L383.5 355.7 L383.7 354.9 L384.4 357.2 L384.6 353.9 L385.3 356.4 L385.5 355.8 L386.2 357.1 L386.4 354.3 L387.1 355.9 L387.3 354.1 L388.0 356.8 L388.2 353.1 L388.5 343.3 L388.9 353.1 L389.1 356.0 L389.8 357.8 L390.0 355.3 L390.3 346.5 L390.7 355.3 L390.9 351.8 L391.2 344.3 L391.6 351.8 L391.8 354.0 L392.5 354.2 L392.7 355.0 L393.4 355.7 L393.6 353.0 L394.3 353.7 L394.5 351.8 L395.2 354.7 L395.4 354.8 L396.1 356.1 L396.3 355.5 L396.6 345.6 L397.0 355.5 L397.2 354.3 L397.9 354.6 L398.1 355.5 L398.4 347.2 L398.8 355.5 L399.0 356.3 L399.3 350.3 L399.7 356.3 L399.9 353.0 L400.2 348.5 L400.6 353.0 L400.8 356.0 L401.5 357.2 L401.7 353.3 L402.4 353.4 L402.6 351.7 L403.3 352.6 L403.5 354.0 L404.2 356.9 L404.4 353.9 L404.7 347.5 L405.1 353.9 L405.3 356.1 L406.0 356.7 L406.2 355.7 L406.9 357.1 L407.1 352.4 L407.8 355.3 L408.0 352.5 L408.7 353.1 L408.9 355.9 L409.2 351.1 L409.6 355.9 L409.8 355.1 L410.1 343.9 L410.5 355.1 L410.7 355.8 L411.4 356.3 L411.6 355.0 L412.3 356.3 L412.5 351.9 L412.8 345.4 L413.2 351.9 L413.4 355.1 L413.7 349.6 L414.1 355.1 L414.3 352.7 L415.0 355.0 L415.2 353.4 L415.9 356.0 L416.1 354.4 L416.4 348.0 L416.8 354.4 L417.0 356.1 L417.7 357.0 L417.9 354.7 L418.2 342.8 L418.6 354.7 L418.8 353.7 L419.5 355.3 L419.7 351.7 L420.4 352.6 L420.6 352.8 L421.3 353.0 L421.5 352.9 L422.2 353.7 L422.4 352.9 L423.1 353.5 L423.3 356.0 L424.0 356.1 L424.2 353.8 L424.9 355.0 L425.1 356.1 L425.8 356.7 L426.0 354.3 L426.7 355.4 L426.9 354.8 L427.6 356.3 L427.8 354.0 L428.5 356.1 L428.7 354.1 L429.4 354.6 L429.6 355.4 L429.9 346.5 L430.3 355.4 L430.5 352.7 L431.2 355.0 L431.4 355.4 L432.1 356.1 L432.3 353.9 L432.6 345.3 L433.0 353.9 L433.2 354.0 L433.5 345.2 L433.9 354.0 L434.1 355.1 L434.8 357.7 L435.0 352.4 L435.3 348.3 L435.7 352.4 L435.9 354.0 L436.6 355.3 L436.8 352.8 L437.5 353.0 L437.7 356.0 L438.4 357.7 L438.6 355.5 L438.9 350.3 L439.3 355.5 L439.5 353.1 L439.8 346.5 L440.2 353.1 L440.4 354.6 L441.1 355.4 L441.3 354.4 L441.6 343.9 L442.0 354.4 L442.2 352.4 L442.5 347.1 L442.9 352.4 L443.1 355.0 L443.8 357.3 L444.0 351.8 L444.7 352.9 L444.9 352.6 L445.6 352.7 L445.8 353.9 L446.5 356.9 L446.7 352.2 L447.4 354.5 L447.6 351.7 L447.9 340.6 L448.3 351.7 L448.5 352.2 L449.2 353.1 L449.4 353.6 L449.7 349.3 L450.1 353.6 L450.3 356.5 L451.0 358.7 L451.2 352.6 L451.5 344.2 L451.9 352.6 L452.1 352.7 L452.8 355.5 L453.0 353.3 L453.3 341.5 L453.7 353.3 L453.9 354.6 L454.2 347.3 L454.6 354.6 L454.8 354.7 L455.1 348.0 L455.5 354.7 L455.7 355.0 L456.4 356.7 L456.6 355.9 L457.3 357.1 L457.5 355.7 L458.2 358.1 L458.4 352.6 L458.7 347.1 L459.1 352.6 L459.3 354.2 L459.6 348.6 L460.0 354.2 L460.2 352.6 L460.9 353.5 L461.1 353.7 L461.8 355.8 L462.0 355.8 L462.3 348.7 L462.7 355.8 L462.9 351.9 L463.6 353.0 L463.8 352.9 L464.1 347.4 L464.5 352.9 L464.7 352.8 L465.4 355.6 L465.6 355.1 L465.9 348.2 L466.3 355.1 L466.5 352.3 L467.2 353.3 L467.4 355.3 L468.1 358.0 L468.3 351.6 L468.6 344.5 L469.0 351.6 L469.2 351.9 L469.9 352.9 L470.1 355.4 L470.8 355.5 L471.0 353.5 L471.3 349.1 L471.7 353.5 L471.9 352.3 L472.6 352.3 L472.8 353.1 L473.5 354.7 L473.7 352.2 L474.4 353.0 L474.6 355.1 L475.3 355.6 L475.5 352.5 L475.8 342.8 L476.2 352.5 L476.4 353.5 L477.1 356.1 L477.3 352.6 L477.6 345.9 L478.0 352.6 L478.2 352.6 L478.5 348.4 L478.9 352.6 L479.1 354.7 L479.8 357.1 L480.0 356.4 L480.3 347.0 L480.7 356.4 L480.9 356.1 L481.2 346.6 L481.6 356.1 L481.8 354.8 L482.5 357.4 L482.7 352.7 L483.4 352.9 L483.6 353.6 L484.3 353.8 L484.5 353.4 L484.8 345.4 L485.2 353.4 L485.4 352.9 L485.7 345.7 L486.1 352.9 L486.3 353.9 L486.6 344.6 L487.0 353.9 L487.2 352.7 L487.5 346.0 L487.9 352.7 L488.1 353.6 L488.4 345.0 L488.8 353.6 L489.0 355.0 L489.7 357.1 L489.9 351.6 L490.6 352.7 L490.8 351.8 L491.5 352.0 L491.7 354.0 L492.4 355.4 L492.6 353.1 L492.9 348.9 L493.3 353.1 L493.5 353.2 L494.2 354.9 L494.4 352.8 L495.1 353.4 L495.3 353.8 L496.0 356.7 L496.2 353.3 L496.9 356.1 L497.1 355.4 L497.8 357.2 L498.0 353.6 L498.7 354.4 L498.9 355.6 L499.6 356.8 L499.8 356.0 L500.1 351.0 L500.5 356.0 L500.7 354.0 L501.0 347.2 L501.4 354.0 L501.6 356.4 L501.9 350.8 L502.3 356.4 L502.5 352.6 L503.2 353.3 L503.4 351.5 L504.1 352.7 L504.3 352.7 L505.0 354.6 L505.2 354.2 L505.9 355.9 L506.1 355.7 L506.8 356.7 L507.0 353.2 L507.7 354.2 L507.9 355.1 L508.6 357.1 L508.8 356.3 L509.5 356.8 L509.7 354.6 L510.4 356.3 L510.6 353.3 L510.9 343.4 L511.3 353.3 L511.5 354.2 L511.8 348.2 L512.2 354.2 L512.4 353.1 L512.7 345.0 L513.1 353.1 L513.3 352.1 L513.6 347.6 L514.0 352.1 L514.2 352.0 L514.9 352.3 L515.1 353.8 L515.8 355.2 L516.0 352.3 L516.7 354.9 L516.9 351.8 L517.2 343.7 L517.6 351.8 L517.8 355.5 L518.5 357.6 L518.7 352.8 L519.4 353.7 L519.6 353.2 L520.3 355.7 L520.5 355.6 L521.2 356.9 L521.4 355.0 L522.1 357.5 L522.3 355.5 L522.6 348.5 L523.0 355.5 L523.2 354.8 L523.5 349.4 L523.9 354.8 L524.1 351.6 L524.8 354.4 L525.0 356.4 L525.3 346.9 L525.7 356.4 L525.9 353.6 L526.6 354.8 L526.8 356.2 L527.5 356.3 L527.7 355.1 L528.0 350.7 L528.4 355.1 L528.6 352.9 L529.3 355.9 L529.5 352.1 L529.8 347.9 L530.2 352.1 L530.4 354.2 L531.1 355.3 L531.3 353.0 L532.0 355.6 L532.2 352.9 L532.9 354.8 L533.1 355.3 L533.8 356.5 L534.0 355.0 L534.7 357.4 L534.9 352.2 L535.2 347.4 L535.6 352.2 L535.8 356.2 L536.1 348.3 L536.5 356.2 L536.7 352.1 L537.0 347.9 L537.4 352.1 L537.6 354.3 L537.9 345.3 L538.3 354.3 L538.5 352.9 L538.8 345.0 L539.2 352.9 L539.4 353.3 L539.7 348.9 L540.1 353.3 L540.3 351.8 L541.0 352.7 L541.2 351.9 L541.5 344.0 L541.9 351.9 L542.1 356.5 L542.4 345.5 L542.8 356.5 L543.0 353.9 L543.7 356.3 L543.9 353.5 L544.2 345.1 L544.6 353.5 L544.8 354.8 L545.5 355.6 L545.7 356.2 L546.4 359.2 L546.6 353.7 L547.3 355.9 L547.5 352.4 L547.8 347.0 L548.2 352.4 L548.4 352.1 L548.7 345.2 L549.1 352.1 L549.3 355.3 L549.6 347.2 L550.0 355.3 L550.2 351.6 L550.5 339.9 L550.9 351.6 L551.1 351.6 L551.8 354.0 L552.0 355.5 L552.7 356.7 L552.9 355.5 L553.6 357.8 L553.8 356.4 L554.1 344.8 L554.5 356.4 L554.7 353.5 L555.4 354.3 L555.6 356.0 L555.9 347.4 L556.3 356.0 L556.5 352.6 L557.2 353.7 L557.4 354.8 L558.1 355.9 L558.3 354.7 L559.0 355.5 L559.2 356.0 L559.5 351.3 L559.9 356.0 L560.1 353.2 L560.8 353.8 L561.0 355.2 L561.7 357.3 L561.9 352.4 L562.2 347.2 L562.6 352.4 L562.8 353.3 L563.5 353.3 L563.7 354.0 L564.4 355.0 L564.6 354.2 L565.3 354.8 L565.5 355.9 L565.8 345.9 L566.2 355.9 L566.4 352.0 L567.1 353.3 L567.3 356.3 L567.6 349.0 L568.0 356.3 L568.2 355.0 L568.5 348.8 L568.9 355.0 L569.1 354.9 L569.8 355.9 L570.0 352.4 L570.7 355.4 L570.9 352.2 L571.6 353.4 L571.8 354.7 L572.1 345.8 L572.5 354.7 L572.7 355.9 L573.4 357.8 L573.6 354.0 L574.3 354.4 L574.5 355.7 L575.2 357.0 L575.4 354.8 L576.1 356.0 L576.3 352.7 L577.0 354.4 L577.2 354.1 L577.5 345.1 L577.9 354.1 L578.1 353.7 L578.8 355.5 L579.0 356.2 L579.3 348.4 L579.7 356.2 L579.9 356.5 L580.6 357.4 L580.8 355.2 L581.5 356.4 L581.7 355.8 L582.0 343.9 L582.4 355.8 L582.6 354.0 L582.9 343.2 L583.3 354.0 L583.5 354.7 L584.2 357.2 L584.4 355.5 L585.1 358.5 L585.3 351.8 L586.0 354.0 L586.2 352.8 L586.9 354.1 L587.1 354.2 L587.8 354.8 L588.0 352.9 L588.7 353.1 L588.9 354.3 L589.6 355.7 L589.8 352.7 L590.5 355.3 L590.7 355.4 L591.4 358.1 L591.6 355.5 L591.9 348.6 L592.3 355.5 L592.5 352.0 L592.8 345.2 L593.2 352.0 L593.4 355.8 L594.1 356.2 L594 372 Z" fill="#36c39d"/></svg>
<div class="a" style="left:84px;top:298.4px;width:87.6px;height:8.1px;background:#7a0f12"></div>
<div class="t" style="left:85.7px;top:298.71px;font-size:6.26px;transform:scaleX(0.91);transform-origin:0 0;color:#ffd6d6;-webkit-text-stroke:0">След 3080 - Вредная работа.avi</div>
<div class="a" style="left:84px;top:336px;width:87px;height:7.5px;background:#c81d1e"></div>
<div class="t" style="left:85.7px;top:336.01px;font-size:6.26px;transform:scaleX(0.91);transform-origin:0 0;color:#ffe0e0;-webkit-text-stroke:0">След 3080 - Вредная работа.avi</div>
<div class="a" style="left:569.8px;top:291px;width:0.55px;height:118px;background:#444"></div>
<svg style="left:566.5px;top:289.5px;" width="7" height="5.5" viewBox="0 0 7 5.5"><path d="M0 0 H7 L3.5 5.5 Z" fill="#111"/></svg>
<div class="a" style="left:598px;top:327px;width:4px;height:81px;background:#c9c9c9;border-radius:2px"></div>
<div class="a" style="left:140px;top:409.5px;width:15px;height:4px;background:#bdbdbd;border-radius:2px"></div>
<div class="a" style="left:0px;top:413.5px;width:605px;height:0.7px;background:#d7d7d7"></div>
<svg style="left:551.95px;top:222.5px;" width="5.5" height="4" viewBox="0 0 5.5 4"><path d="M0.5 0.8 L2.75 3.2 L5.0 0.8" fill="none" stroke="#555" stroke-width="0.8"/></svg>
<div class="a" style="left:562.2px;top:216px;width:0.6px;height:16px;background:#dcdcdc"></div>
<svg style="left:567px;top:220.5px;" width="7" height="9" viewBox="0 0 7 9"><path d="M2 0.8 V8" stroke="#444" stroke-width="0.7"/><path d="M0.8 7 L2 8.6 L3.2 7 Z" fill="#444"/><path d="M3 3.5 L5.8 2.3 V4.7 Z" fill="#444"/></svg>
<svg style="left:582px;top:220.5px;" width="7" height="9" viewBox="0 0 7 9"><path d="M4.5 0.8 V8" stroke="#444" stroke-width="0.7"/><path d="M3.3 7 L4.5 8.6 L5.7 7 Z" fill="#444"/><path d="M3.5 3.5 L0.8 2.3 V4.7 Z" fill="#444"/></svg>
<svg style="left:596px;top:221.8px;" width="7.4" height="5.5" viewBox="0 0 7.4 5.5"><path d="M3.7 0 L0 2.75 L3.7 5.5 Z M7.4 0 L3.7 2.75 L7.4 5.5 Z" fill="#111"/></svg>
<svg style="left:610.3px;top:221.3px;" width="6" height="6.6" viewBox="0 0 6 6.6"><path d="M0 0 L6 3.3 L0 6.6 Z" fill="#111"/></svg>
<svg style="left:622.8px;top:222.8px;" width="5" height="4" viewBox="0 0 5 4"><path d="M0.5 0.8 L2.5 3.2 L4.5 0.8" fill="none" stroke="#666" stroke-width="0.8"/></svg>
<svg style="left:633.8px;top:221.8px;" width="7.4" height="5.5" viewBox="0 0 7.4 5.5"><path d="M0 0 L3.7 2.75 L0 5.5 Z M3.7 0 L7.4 2.75 L3.7 5.5 Z" fill="#111"/></svg>
<div class="a" style="left:645.2px;top:218.2px;width:13px;height:12px;background:#dadada;border-radius:1.5px"></div>
<svg style="left:648.7px;top:221.2px;" width="6" height="6" viewBox="0 0 6 6"><rect x="0.5" y="0.5" width="5" height="5" fill="none" stroke="#444" stroke-width="0.7"/><path d="M0.5 5.5 L5.5 0.5 M2 0 V1.2" stroke="#444" stroke-width="0.7"/></svg>
<div class="a" style="left:660.4px;top:216px;width:0.7px;height:16px;background:#d5d5d5"></div>
<div class="t" style="left:667px;top:220.41px;font-size:6.21px;transform:scaleX(0.95);transform-origin:0 0;color:#444;letter-spacing:0.62px;-webkit-text-stroke:0.1px #444">00:06:09:18</div>
<svg style="left:709px;top:219.5px;" width="6" height="10" viewBox="0 0 6 10"><path d="M0.5 3 L3 0.6 L5.5 3 M0.5 6.5 L3 8.9 L5.5 6.5" fill="none" stroke="#555" stroke-width="0.8"/></svg>
<svg style="left:721px;top:221px;" width="6" height="7" viewBox="0 0 6 7"><path d="M0.3 1.2 H5.7 M0.3 3.5 H5.7 M0.3 5.8 H5.7" stroke="#222" stroke-width="0.85"/></svg>
<div class="a" style="left:732px;top:216px;width:0.7px;height:16px;background:#d5d5d5"></div>
<div class="a" style="left:735px;top:216.8px;width:31px;height:9.8px;background:#48c94a"></div>
<div class="a" style="left:738.9px;top:216.8px;width:0.5px;height:9.8px;background:rgba(255,255,255,.35)"></div>
<div class="a" style="left:742.8px;top:216.8px;width:0.5px;height:9.8px;background:rgba(255,255,255,.35)"></div>
<div class="a" style="left:746.7px;top:216.8px;width:0.5px;height:9.8px;background:rgba(255,255,255,.35)"></div>
<div class="a" style="left:750.6px;top:216.8px;width:0.5px;height:9.8px;background:rgba(255,255,255,.35)"></div>
<div class="a" style="left:754.5px;top:216.8px;width:0.5px;height:9.8px;background:rgba(255,255,255,.35)"></div>
<div class="a" style="left:758.4px;top:216.8px;width:0.5px;height:9.8px;background:rgba(255,255,255,.35)"></div>
<div class="a" style="left:762.3px;top:216.8px;width:0.5px;height:9.8px;background:rgba(255,255,255,.35)"></div>
<div class="a" style="left:735px;top:221.5px;width:31px;height:0.5px;background:rgba(255,255,255,.45)"></div>
<div class="a" style="left:779px;top:217px;width:0.7px;height:9px;background:#777"></div>
<div class="t" style="left:740.5px;top:227.46px;font-size:4.84px;transform:scaleX(0.91);transform-origin:0 0;color:#555">-42</div>
<div class="t" style="left:750px;top:227.46px;font-size:4.84px;transform:scaleX(0.91);transform-origin:0 0;color:#555">-30</div>
<div class="t" style="left:765.5px;top:227.46px;font-size:4.84px;transform:scaleX(0.91);transform-origin:0 0;color:#555">-18</div>
<div class="t" style="left:774.5px;top:227.46px;font-size:4.84px;transform:scaleX(0.91);transform-origin:0 0;color:#555">-12</div>
<div class="t" style="left:785.5px;top:227.46px;font-size:4.84px;transform:scaleX(0.91);transform-origin:0 0;color:#555">-6</div>
<div class="t" style="left:794.5px;top:227.46px;font-size:4.84px;transform:scaleX(0.91);transform-origin:0 0;color:#555">0</div>
<div class="a" style="left:581.5px;top:235.7px;width:107.5px;height:15.5px;background:#d5d5d5"></div>
<div class="t" style="left:551px;top:239.72px;font-size:6.59px;transform:scaleX(0.91);transform-origin:0 0;color:#1a1a1a">р проекта</div>
<div class="t" style="left:586px;top:239.72px;font-size:6.59px;transform:scaleX(0.91);transform-origin:0 0;color:#1a1a1a">Редактор речи</div>
<div class="t" style="left:634.5px;top:239.72px;font-size:6.59px;transform:scaleX(0.91);transform-origin:0 0;color:#1a1a1a">Заметки к проекту</div>
<div class="a" style="left:689px;top:235px;width:111px;height:16.2px;background:#eff0f1"></div>
<svg style="left:719.8px;top:259.3px;" width="8.5" height="4" viewBox="0 0 8.5 4"><rect x="0.4" y="0.4" width="3.4" height="3.2" fill="none" stroke="#333" stroke-width="0.8"/><rect x="4.7" y="0.4" width="3.4" height="3.2" fill="none" stroke="#333" stroke-width="0.8"/></svg>
<svg style="left:733.25px;top:259.5px;" width="5.5" height="4" viewBox="0 0 5.5 4"><path d="M0.5 0.8 L2.75 3.2 L5.0 0.8" fill="none" stroke="#555" stroke-width="0.8"/></svg>
<svg style="left:744.8px;top:258px;" width="6.5" height="6.5" viewBox="0 0 6.5 6.5"><path d="M0.5 1 H5 L6 2 V6 H0.5 Z" fill="none" stroke="#222" stroke-width="0.9"/><rect x="1.8" y="3.5" width="3" height="2" fill="#222"/><path d="M3.5 0.5 L5 2.5" stroke="#222" stroke-width="0.7"/></svg>
<svg style="left:759px;top:258.2px;" width="6" height="6.5" viewBox="0 0 6 6.5"><rect x="0.4" y="0.4" width="5.2" height="5.7" fill="none" stroke="#999" stroke-width="0.7"/><path d="M3 0.4 V6.1" stroke="#999" stroke-width="0.7"/></svg>
<svg style="left:772px;top:259px;" width="8" height="5" viewBox="0 0 8 5"><path d="M0.3 2.5 Q4 -0.8 7.7 2.5" fill="none" stroke="#222" stroke-width="0.9"/><circle cx="4" cy="2.6" r="1.6" fill="#222"/></svg>
<svg style="left:787.3px;top:258.2px;" width="5.4" height="6.5" viewBox="0 0 5.4 6.5"><circle cx="2.7" cy="3.8" r="2.3" fill="none" stroke="#222" stroke-width="0.8"/><path d="M2.7 0 V2" stroke="#222" stroke-width="0.8"/></svg>
<div class="a" style="left:605px;top:399.2px;width:195px;height:13px;background:#d6d6d6"></div>
<div class="a" style="left:646.5px;top:399.2px;width:58.5px;height:13px;background:#eff0f1"></div>
<div class="a" style="left:646.5px;top:411px;width:58.5px;height:1px;background:#3daee9"></div>
<div class="t" style="left:609px;top:402.72px;font-size:6.59px;transform:scaleX(0.91);transform-origin:0 0;color:#1a1a1a">Звуковой...</div>
<div class="t" style="left:649px;top:402.72px;font-size:6.59px;transform:scaleX(0.91);transform-origin:0 0;color:#1a1a1a">Стек эффектов/к...</div>
<div class="t" style="left:709px;top:402.72px;font-size:6.59px;transform:scaleX(0.91);transform-origin:0 0;color:#1a1a1a">Переназначен...</div>
<div class="t" style="left:766px;top:402.72px;font-size:6.59px;transform:scaleX(0.91);transform-origin:0 0;color:#1a1a1a">Субтитры</div>
<div class="a" style="left:549.2px;top:283px;width:1.2px;height:131px;background:#a8a8a8"></div>
<div class="a" style="left:549.2px;top:415.5px;width:1.3px;height:12.5px;background:#1c1c1c"></div>
<div class="a" style="left:177px;top:25.5px;width:233.5px;height:338px;background:#f2f3f3;border:1px solid #dcdcdc;border-top-color:#e8e8e8;border-left-color:#e6e6e6;box-shadow:1px 1px 2px rgba(0,0,0,.18)"></div>
<div class="a" style="left:177.8px;top:239.2px;width:231.7px;height:12.4px;background:#c2def5;border:1px solid #8cc2ea;border-radius:2px"></div>
<div class="a" style="left:182px;top:266.3px;width:226px;height:0.8px;background:#dadada"></div>
<div class="a" style="left:182px;top:321.6px;width:226px;height:0.8px;background:#dadada"></div>
<div class="t" style="left:205px;top:30.92px;font-size:6.59px;transform:scaleX(0.91);transform-origin:0 0;color:#151515">Выбрать</div>
<svg style="left:400.2px;top:31.400000000000006px;" width="4" height="6" viewBox="0 0 4 6"><path d="M0.6 0.4 L3.3 2.9 L0.6 5.4" fill="none" stroke="#5a5a5a" stroke-width="1"/></svg>
<div class="t" style="left:205px;top:43.72px;font-size:6.59px;transform:scaleX(0.91);transform-origin:0 0;color:#151515">Вставить</div>
<svg style="left:400.2px;top:44.2px;" width="4" height="6" viewBox="0 0 4 6"><path d="M0.6 0.4 L3.3 2.9 L0.6 5.4" fill="none" stroke="#5a5a5a" stroke-width="1"/></svg>
<div class="t" style="left:205px;top:56.72px;font-size:6.59px;transform:scaleX(0.91);transform-origin:0 0;color:#151515">Удалить</div>
<svg style="left:400.2px;top:57.2px;" width="4" height="6" viewBox="0 0 4 6"><path d="M0.6 0.4 L3.3 2.9 L0.6 5.4" fill="none" stroke="#5a5a5a" stroke-width="1"/></svg>
<div class="t" style="left:205px;top:69.72px;font-size:6.59px;transform:scaleX(0.91);transform-origin:0 0;color:#151515">Предпросмотр монтажного стола</div>
<svg style="left:400.2px;top:70.2px;" width="4" height="6" viewBox="0 0 4 6"><path d="M0.6 0.4 L3.3 2.9 L0.6 5.4" fill="none" stroke="#5a5a5a" stroke-width="1"/></svg>
<div class="t" style="left:205px;top:82.92px;font-size:6.59px;transform:scaleX(0.91);transform-origin:0 0;color:#151515">Изменить начало элемента</div>
<div class="t" style="left:393px;top:82.92px;font-size:6.59px;transform:scaleX(0.91);transform-origin:0 0;color:#777">(</div>
<div class="t" style="left:205px;top:95.82px;font-size:6.59px;transform:scaleX(0.91);transform-origin:0 0;color:#151515">Изменить конец элемента</div>
<div class="t" style="left:393px;top:95.82px;font-size:6.59px;transform:scaleX(0.91);transform-origin:0 0;color:#777">)</div>
<div class="t" style="left:205px;top:108.82px;font-size:6.59px;transform:scaleX(0.91);transform-origin:0 0;color:#151515">Текущий клип</div>
<svg style="left:400.2px;top:109.3px;" width="4" height="6" viewBox="0 0 4 6"><path d="M0.6 0.4 L3.3 2.9 L0.6 5.4" fill="none" stroke="#5a5a5a" stroke-width="1"/></svg>
<div class="t" style="left:205px;top:121.62px;font-size:6.59px;transform:scaleX(0.91);transform-origin:0 0;color:#151515">Текущая дорожка</div>
<svg style="left:400.2px;top:122.10000000000001px;" width="4" height="6" viewBox="0 0 4 6"><path d="M0.6 0.4 L3.3 2.9 L0.6 5.4" fill="none" stroke="#5a5a5a" stroke-width="1"/></svg>
<div class="t" style="left:205px;top:134.62px;font-size:6.59px;transform:scaleX(0.91);transform-origin:0 0;color:#151515">Захватить текущий элемент</div>
<div class="t" style="right:405px;top:134.62px;font-size:6.59px;transform:scaleX(0.91);transform-origin:100% 0;color:#6e6e6e">Shift+G</div>
<svg style="left:194.8px;top:135.4px;" width="6" height="6" viewBox="0 0 6 6"><path d="M3 0.4 V5.6 M0.4 3 H5.6" stroke="#6a6a6a" stroke-width="0.6"/><path d="M2 1.3 L3 0.3 L4 1.3 M2 4.7 L3 5.7 L4 4.7 M1.3 2 L0.3 3 L1.3 4 M4.7 2 L5.7 3 L4.7 4" fill="none" stroke="#6a6a6a" stroke-width="0.6"/><rect x="2.3" y="2.3" width="1.4" height="1.4" fill="#fff" stroke="#6a6a6a" stroke-width="0.4"/></svg>
<div class="t" style="left:205px;top:147.62px;font-size:6.59px;transform:scaleX(0.91);transform-origin:0 0;color:#151515">Направляющие</div>
<svg style="left:400.2px;top:148.1px;" width="4" height="6" viewBox="0 0 4 6"><path d="M0.6 0.4 L3.3 2.9 L0.6 5.4" fill="none" stroke="#5a5a5a" stroke-width="1"/></svg>
<div class="t" style="left:205px;top:160.62px;font-size:6.59px;transform:scaleX(0.91);transform-origin:0 0;color:#151515">Пробел</div>
<svg style="left:400.2px;top:161.1px;" width="4" height="6" viewBox="0 0 4 6"><path d="M0.6 0.4 L3.3 2.9 L0.6 5.4" fill="none" stroke="#5a5a5a" stroke-width="1"/></svg>
<div class="t" style="left:205px;top:173.62px;font-size:6.59px;transform:scaleX(0.91);transform-origin:0 0;color:#151515">Сгруппировать клипы</div>
<div class="t" style="right:405px;top:173.62px;font-size:6.59px;transform:scaleX(0.91);transform-origin:100% 0;color:#6e6e6e">Ctrl+G</div>
<svg style="left:195.0px;top:174.6px;" width="5.6" height="5.6" viewBox="0 0 5.6 5.6"><rect x="0.3" y="0.3" width="5" height="5" fill="#333"/><rect x="1" y="1" width="1.5" height="1.5" fill="#e8e8e8"/><rect x="3.1" y="1" width="1.5" height="1.5" fill="#e8e8e8"/><rect x="1" y="3.1" width="1.5" height="1.5" fill="#e8e8e8"/><rect x="3.1" y="3.1" width="1.5" height="1.5" fill="#e8e8e8"/></svg>
<div class="t" style="left:205px;top:186.72px;font-size:6.59px;transform:scaleX(0.91);transform-origin:0 0;color:#151515">Разгруппировать клипы</div>
<div class="t" style="right:405px;top:186.72px;font-size:6.59px;transform:scaleX(0.91);transform-origin:100% 0;color:#6e6e6e">Ctrl+Shift+G</div>
<svg style="left:195.0px;top:187.7px;" width="5.6" height="5.6" viewBox="0 0 5.6 5.6"><path d="M1.2 1.2 L4.4 4.4 M4.4 1.2 L1.2 4.4" stroke="#333" stroke-width="0.8"/><path d="M0.3 2 V0.3 H2 M3.6 0.3 H5.3 V2 M0.3 3.6 V5.3 H2 M3.6 5.3 H5.3 V3.6" fill="none" stroke="#333" stroke-width="0.8"/></svg>
<div class="t" style="left:205px;top:199.82px;font-size:6.59px;transform:scaleX(0.91);transform-origin:0 0;color:#151515">Добавить выбранное на монтажном столе в библиотеку</div>
<svg style="left:195.10000000000002px;top:200.4px;" width="6" height="6.5" viewBox="0 0 6 6.5"><path d="M2.8 0.4 H0.5 V6 H2" fill="none" stroke="#333" stroke-width="0.8"/><path d="M4 1.5 V6 M3 5 L4 6.1 L5 5" fill="none" stroke="#333" stroke-width="0.75"/></svg>
<div class="t" style="left:205px;top:212.82px;font-size:6.59px;transform:scaleX(0.91);transform-origin:0 0;color:#151515">Создать последовательность из выделенных элементов</div>
<svg style="left:195.10000000000002px;top:213.4px;" width="6" height="6.5" viewBox="0 0 6 6.5"><path d="M2.8 0.4 H0.5 V6 H2" fill="none" stroke="#333" stroke-width="0.8"/><path d="M4 1.5 V6 M3 5 L4 6.1 L5 5" fill="none" stroke="#333" stroke-width="0.75"/></svg>
<div class="t" style="left:205px;top:225.82px;font-size:6.59px;transform:scaleX(0.91);transform-origin:0 0;color:#151515">Дорожки</div>
<svg style="left:400.2px;top:226.29999999999998px;" width="4" height="6" viewBox="0 0 4 6"><path d="M0.6 0.4 L3.3 2.9 L0.6 5.4" fill="none" stroke="#5a5a5a" stroke-width="1"/></svg>
<div class="t" style="left:205px;top:241.92px;font-size:6.59px;transform:scaleX(0.91);transform-origin:0 0;color:#151515">Добавить эффект</div>
<svg style="left:400.2px;top:242.39999999999998px;" width="4" height="6" viewBox="0 0 4 6"><path d="M0.6 0.4 L3.3 2.9 L0.6 5.4" fill="none" stroke="#5a5a5a" stroke-width="1"/></svg>
<div class="t" style="left:205px;top:255.12px;font-size:6.59px;transform:scaleX(0.91);transform-origin:0 0;color:#151515">Выключить эффекты на монтажном столе</div>
<svg style="left:194.3px;top:255.39999999999998px;" width="7" height="7" viewBox="0 0 7 7"><path d="M3.5 0.4 L4.4 2.5 L6.7 2.6 L4.9 4.1 L5.5 6.5 L3.5 5.2 L1.5 6.5 L2.1 4.1 L0.3 2.6 L2.6 2.5 Z" fill="#111"/></svg>
<div class="a" style="left:181.8px;top:254.99999999999997px;width:7.9px;height:7.9px;background:#fdfdfd;border:0.8px solid #d4d4d4;border-radius:1.5px"></div>
<div class="t" style="left:205px;top:271.52px;font-size:6.59px;transform:scaleX(0.91);transform-origin:0 0;color:#151515">Показывать миниатюры видео</div>
<svg style="left:195.3px;top:272.5px;" width="5.2" height="5.8" viewBox="0 0 5.2 5.8"><rect x="0" y="0" width="5.2" height="5.8" fill="#1e1e1e"/><rect x="1.1" y="0.9" width="3" height="1.5" fill="#f2f3f3"/><rect x="1.1" y="3.4" width="3" height="1.5" fill="#f2f3f3"/></svg>
<div class="a" style="left:181.8px;top:271.40000000000003px;width:7.9px;height:7.9px;background:#c6e0f5;border:0.8px solid #78b0dc;border-radius:1.5px"></div>
<svg style="left:181.8px;top:271.40000000000003px;" width="7.9" height="7.9" viewBox="0 0 7.9 7.9"><path d="M1.7 3.9 L3.4 5.6 L6.3 2.3" fill="none" stroke="#173c60" stroke-width="1.2"/></svg>
<div class="t" style="left:205px;top:284.62px;font-size:6.59px;transform:scaleX(0.91);transform-origin:0 0;color:#151515">Показывать миниатюры звука</div>
<svg style="left:194.3px;top:284.9px;" width="7" height="7" viewBox="0 0 7 7"><path d="M0.3 3.5 H2.6 M1.45 2.3 V4.7" stroke="#111" stroke-width="0.9"/><path d="M4.6 1.2 L6.8 3.5 L4.6 5.8 L2.6 3.5 Z" fill="#111"/></svg>
<div class="a" style="left:181.8px;top:284.5px;width:7.9px;height:7.9px;background:#c6e0f5;border:0.8px solid #78b0dc;border-radius:1.5px"></div>
<svg style="left:181.8px;top:284.5px;" width="7.9" height="7.9" viewBox="0 0 7.9 7.9"><path d="M1.7 3.9 L3.4 5.6 L6.3 2.3" fill="none" stroke="#173c60" stroke-width="1.2"/></svg>
<div class="t" style="left:205px;top:297.52px;font-size:6.59px;transform:scaleX(0.91);transform-origin:0 0;color:#151515">Показать комментарии к маркерам</div>
<svg style="left:194.3px;top:297.8px;" width="7" height="7" viewBox="0 0 7 7"><path d="M1.2 0.3 V6.8" stroke="#111" stroke-width="1"/><path d="M1.5 0.7 L6.2 2.6 L1.5 4.3 Z" fill="#111"/></svg>
<div class="a" style="left:181.8px;top:297.40000000000003px;width:7.9px;height:7.9px;background:#c6e0f5;border:0.8px solid #78b0dc;border-radius:1.5px"></div>
<svg style="left:181.8px;top:297.40000000000003px;" width="7.9" height="7.9" viewBox="0 0 7.9 7.9"><path d="M1.7 3.9 L3.4 5.6 L6.3 2.3" fill="none" stroke="#173c60" stroke-width="1.2"/></svg>
<div class="t" style="left:205px;top:310.62px;font-size:6.59px;transform:scaleX(0.91);transform-origin:0 0;color:#151515">Привязка</div>
<svg style="left:194.3px;top:310.4px;" width="7" height="8" viewBox="0 0 7 8"><path d="M1.5 7.5 V3.6 A2 2 0 0 1 5.5 3.6 V7.5" fill="none" stroke="#1a1a1a" stroke-width="1.3"/></svg>
<div class="a" style="left:181.8px;top:310.5px;width:7.9px;height:7.9px;background:#c6e0f5;border:0.8px solid #78b0dc;border-radius:1.5px"></div>
<svg style="left:181.8px;top:310.5px;" width="7.9" height="7.9" viewBox="0 0 7.9 7.9"><path d="M1.7 3.9 L3.4 5.6 L6.3 2.3" fill="none" stroke="#173c60" stroke-width="1.2"/></svg>
<div class="t" style="left:205px;top:327.12px;font-size:6.59px;transform:scaleX(0.91);transform-origin:0 0;color:#151515">Увеличить</div>
<div class="t" style="right:405px;top:327.12px;font-size:6.59px;transform:scaleX(0.91);transform-origin:100% 0;color:#6e6e6e">Ctrl++</div>
<svg style="left:194.3px;top:327.4px;" width="7" height="7" viewBox="0 0 7 7"><circle cx="3.2" cy="3.2" r="2.6" fill="none" stroke="#2a2a2a" stroke-width="0.8"/><path d="M5 5 L6.7 6.7" stroke="#2a2a2a" stroke-width="1"/><path d="M2 3.2 H4.4" stroke="#2a2a2a" stroke-width="0.7"/><path d="M3.2 2 V4.4" stroke="#2a2a2a" stroke-width="0.7"/></svg>
<div class="t" style="left:205px;top:340.62px;font-size:6.59px;transform:scaleX(0.91);transform-origin:0 0;color:#151515">Уменьшить</div>
<div class="t" style="right:405px;top:340.62px;font-size:6.59px;transform:scaleX(0.91);transform-origin:100% 0;color:#6e6e6e">Ctrl+-</div>
<svg style="left:194.3px;top:340.9px;" width="7" height="7" viewBox="0 0 7 7"><circle cx="3.2" cy="3.2" r="2.6" fill="none" stroke="#2a2a2a" stroke-width="0.8"/><path d="M5 5 L6.7 6.7" stroke="#2a2a2a" stroke-width="1"/><path d="M2 3.2 H4.4" stroke="#2a2a2a" stroke-width="0.7"/></svg>
<div class="t" style="left:205px;top:353.22px;font-size:6.59px;transform:scaleX(0.91);transform-origin:0 0;color:#151515">Выровнять по размеру проекта</div>
<svg style="left:194.3px;top:353.5px;" width="7" height="7" viewBox="0 0 7 7"><circle cx="3.2" cy="3.2" r="2.6" fill="none" stroke="#2a2a2a" stroke-width="0.8"/><path d="M5 5 L6.7 6.7" stroke="#2a2a2a" stroke-width="1"/><path d="M2 3.2 H4.4" stroke="#2a2a2a" stroke-width="0.7"/><rect x="2" y="2" width="2.4" height="2.4" fill="none" stroke="#2a2a2a" stroke-width="0.6"/></svg>
<div class="a" style="left:409.5px;top:82px;width:139.5px;height:360px;background:#f3f4f4;border:1px solid #dcdcdc;border-radius:2px;box-shadow:1px 1px 2px rgba(0,0,0,.18)"></div>
<div class="t" style="left:416px;top:87.32px;font-size:6.59px;transform:scaleX(0.91);transform-origin:0 0;color:#151515">Альфа-канал, маски и кеинг</div>
<svg style="left:538.5px;top:87.8px;" width="4" height="6" viewBox="0 0 4 6"><path d="M0.6 0.4 L3.3 2.9 L0.6 5.4" fill="none" stroke="#5a5a5a" stroke-width="1"/></svg>
<div class="t" style="left:416px;top:100.30px;font-size:6.59px;transform:scaleX(0.91);transform-origin:0 0;color:#151515">Размытие и чёткость</div>
<svg style="left:538.5px;top:100.77499999999999px;" width="4" height="6" viewBox="0 0 4 6"><path d="M0.6 0.4 L3.3 2.9 L0.6 5.4" fill="none" stroke="#5a5a5a" stroke-width="1"/></svg>
<div class="t" style="left:416px;top:113.27px;font-size:6.59px;transform:scaleX(0.91);transform-origin:0 0;color:#151515">Трансформация, искажение и перспектива</div>
<svg style="left:538.5px;top:113.75px;" width="4" height="6" viewBox="0 0 4 6"><path d="M0.6 0.4 L3.3 2.9 L0.6 5.4" fill="none" stroke="#5a5a5a" stroke-width="1"/></svg>
<div class="t" style="left:416px;top:126.25px;font-size:6.59px;transform:scaleX(0.91);transform-origin:0 0;color:#151515">Зернистость и шум</div>
<svg style="left:538.5px;top:126.72499999999997px;" width="4" height="6" viewBox="0 0 4 6"><path d="M0.6 0.4 L3.3 2.9 L0.6 5.4" fill="none" stroke="#5a5a5a" stroke-width="1"/></svg>
<div class="t" style="left:416px;top:139.22px;font-size:6.59px;transform:scaleX(0.91);transform-origin:0 0;color:#151515">Утилиты</div>
<svg style="left:538.5px;top:139.7px;" width="4" height="6" viewBox="0 0 4 6"><path d="M0.6 0.4 L3.3 2.9 L0.6 5.4" fill="none" stroke="#5a5a5a" stroke-width="1"/></svg>
<div class="t" style="left:416px;top:152.20px;font-size:6.59px;transform:scaleX(0.91);transform-origin:0 0;color:#151515">Генерирование</div>
<svg style="left:538.5px;top:152.67499999999998px;" width="4" height="6" viewBox="0 0 4 6"><path d="M0.6 0.4 L3.3 2.9 L0.6 5.4" fill="none" stroke="#5a5a5a" stroke-width="1"/></svg>
<div class="t" style="left:416px;top:165.17px;font-size:6.59px;transform:scaleX(0.91);transform-origin:0 0;color:#151515">На основе</div>
<svg style="left:538.5px;top:165.64999999999998px;" width="4" height="6" viewBox="0 0 4 6"><path d="M0.6 0.4 L3.3 2.9 L0.6 5.4" fill="none" stroke="#5a5a5a" stroke-width="1"/></svg>
<div class="t" style="left:416px;top:178.15px;font-size:6.59px;transform:scaleX(0.91);transform-origin:0 0;color:#151515">Коррекция цвета и изображения</div>
<svg style="left:538.5px;top:178.625px;" width="4" height="6" viewBox="0 0 4 6"><path d="M0.6 0.4 L3.3 2.9 L0.6 5.4" fill="none" stroke="#5a5a5a" stroke-width="1"/></svg>
<div class="t" style="left:416px;top:191.12px;font-size:6.59px;transform:scaleX(0.91);transform-origin:0 0;color:#151515">Коррекция изображения</div>
<svg style="left:538.5px;top:191.59999999999997px;" width="4" height="6" viewBox="0 0 4 6"><path d="M0.6 0.4 L3.3 2.9 L0.6 5.4" fill="none" stroke="#5a5a5a" stroke-width="1"/></svg>
<div class="t" style="left:416px;top:204.10px;font-size:6.59px;transform:scaleX(0.91);transform-origin:0 0;color:#151515">Стилизация</div>
<svg style="left:538.5px;top:204.575px;" width="4" height="6" viewBox="0 0 4 6"><path d="M0.6 0.4 L3.3 2.9 L0.6 5.4" fill="none" stroke="#5a5a5a" stroke-width="1"/></svg>
<div class="t" style="left:416px;top:217.07px;font-size:6.59px;transform:scaleX(0.91);transform-origin:0 0;color:#151515">Движение</div>
<svg style="left:538.5px;top:217.54999999999998px;" width="4" height="6" viewBox="0 0 4 6"><path d="M0.6 0.4 L3.3 2.9 L0.6 5.4" fill="none" stroke="#5a5a5a" stroke-width="1"/></svg>
<div class="t" style="left:416px;top:230.05px;font-size:6.59px;transform:scaleX(0.91);transform-origin:0 0;color:#151515">VR360 и 3D</div>
<svg style="left:538.5px;top:230.52499999999998px;" width="4" height="6" viewBox="0 0 4 6"><path d="M0.6 0.4 L3.3 2.9 L0.6 5.4" fill="none" stroke="#5a5a5a" stroke-width="1"/></svg>
<div class="t" style="left:416px;top:243.02px;font-size:6.59px;transform:scaleX(0.91);transform-origin:0 0;color:#151515">Громкость и динамика</div>
<svg style="left:538.5px;top:243.49999999999997px;" width="4" height="6" viewBox="0 0 4 6"><path d="M0.6 0.4 L3.3 2.9 L0.6 5.4" fill="none" stroke="#5a5a5a" stroke-width="1"/></svg>
<div class="t" style="left:416px;top:256.00px;font-size:6.59px;transform:scaleX(0.91);transform-origin:0 0;color:#151515">Реверберация, эхо и задержки</div>
<svg style="left:538.5px;top:256.47499999999997px;" width="4" height="6" viewBox="0 0 4 6"><path d="M0.6 0.4 L3.3 2.9 L0.6 5.4" fill="none" stroke="#5a5a5a" stroke-width="1"/></svg>
<div class="t" style="left:416px;top:268.97px;font-size:6.59px;transform:scaleX(0.91);transform-origin:0 0;color:#151515">Эквалайзеры и фильтры</div>
<svg style="left:538.5px;top:269.45px;" width="4" height="6" viewBox="0 0 4 6"><path d="M0.6 0.4 L3.3 2.9 L0.6 5.4" fill="none" stroke="#5a5a5a" stroke-width="1"/></svg>
<div class="t" style="left:416px;top:281.95px;font-size:6.59px;transform:scaleX(0.91);transform-origin:0 0;color:#151515">Модуляторы</div>
<svg style="left:538.5px;top:282.425px;" width="4" height="6" viewBox="0 0 4 6"><path d="M0.6 0.4 L3.3 2.9 L0.6 5.4" fill="none" stroke="#5a5a5a" stroke-width="1"/></svg>
<div class="t" style="left:416px;top:294.92px;font-size:6.59px;transform:scaleX(0.91);transform-origin:0 0;color:#151515">Noise Reduction and Audio Restoration</div>
<svg style="left:538.5px;top:295.4px;" width="4" height="6" viewBox="0 0 4 6"><path d="M0.6 0.4 L3.3 2.9 L0.6 5.4" fill="none" stroke="#5a5a5a" stroke-width="1"/></svg>
<div class="t" style="left:416px;top:307.90px;font-size:6.59px;transform:scaleX(0.91);transform-origin:0 0;color:#151515">Каналы</div>
<svg style="left:538.5px;top:308.37499999999994px;" width="4" height="6" viewBox="0 0 4 6"><path d="M0.6 0.4 L3.3 2.9 L0.6 5.4" fill="none" stroke="#5a5a5a" stroke-width="1"/></svg>
<div class="t" style="left:416px;top:320.87px;font-size:6.59px;transform:scaleX(0.91);transform-origin:0 0;color:#151515">Сервис</div>
<svg style="left:538.5px;top:321.34999999999997px;" width="4" height="6" viewBox="0 0 4 6"><path d="M0.6 0.4 L3.3 2.9 L0.6 5.4" fill="none" stroke="#5a5a5a" stroke-width="1"/></svg>
<div class="t" style="left:416px;top:333.85px;font-size:6.59px;transform:scaleX(0.91);transform-origin:0 0;color:#151515">Стерео и бинауральные эффекты</div>
<svg style="left:538.5px;top:334.325px;" width="4" height="6" viewBox="0 0 4 6"><path d="M0.6 0.4 L3.3 2.9 L0.6 5.4" fill="none" stroke="#5a5a5a" stroke-width="1"/></svg>
<div class="t" style="left:416px;top:346.82px;font-size:6.59px;transform:scaleX(0.91);transform-origin:0 0;color:#151515">Высота звука и время</div>
<svg style="left:538.5px;top:347.3px;" width="4" height="6" viewBox="0 0 4 6"><path d="M0.6 0.4 L3.3 2.9 L0.6 5.4" fill="none" stroke="#5a5a5a" stroke-width="1"/></svg>
<div class="t" style="left:416px;top:359.80px;font-size:6.59px;transform:scaleX(0.91);transform-origin:0 0;color:#151515">Модули расширения TAP</div>
<svg style="left:538.5px;top:360.2749999999999px;" width="4" height="6" viewBox="0 0 4 6"><path d="M0.6 0.4 L3.3 2.9 L0.6 5.4" fill="none" stroke="#5a5a5a" stroke-width="1"/></svg>
<div class="t" style="left:416px;top:372.77px;font-size:6.59px;transform:scaleX(0.91);transform-origin:0 0;color:#151515">Модули расширения CMT</div>
<svg style="left:538.5px;top:373.24999999999994px;" width="4" height="6" viewBox="0 0 4 6"><path d="M0.6 0.4 L3.3 2.9 L0.6 5.4" fill="none" stroke="#5a5a5a" stroke-width="1"/></svg>
<div class="t" style="left:416px;top:385.75px;font-size:6.59px;transform:scaleX(0.91);transform-origin:0 0;color:#151515">Устаревшие</div>
<svg style="left:538.5px;top:386.22499999999997px;" width="4" height="6" viewBox="0 0 4 6"><path d="M0.6 0.4 L3.3 2.9 L0.6 5.4" fill="none" stroke="#5a5a5a" stroke-width="1"/></svg>
<div class="t" style="left:416px;top:398.72px;font-size:6.59px;transform:scaleX(0.91);transform-origin:0 0;color:#151515">Модули расширения LADSPA</div>
<svg style="left:538.5px;top:399.2px;" width="4" height="6" viewBox="0 0 4 6"><path d="M0.6 0.4 L3.3 2.9 L0.6 5.4" fill="none" stroke="#5a5a5a" stroke-width="1"/></svg>
<div class="t" style="left:416px;top:411.70px;font-size:6.59px;transform:scaleX(0.91);transform-origin:0 0;color:#151515">Разное</div>
<svg style="left:538.5px;top:412.175px;" width="4" height="6" viewBox="0 0 4 6"><path d="M0.6 0.4 L3.3 2.9 L0.6 5.4" fill="none" stroke="#5a5a5a" stroke-width="1"/></svg>
<div class="t" style="left:416px;top:424.67px;font-size:6.59px;transform:scaleX(0.91);transform-origin:0 0;color:#151515">Звук</div>
<svg style="left:538.5px;top:425.1499999999999px;" width="4" height="6" viewBox="0 0 4 6"><path d="M0.6 0.4 L3.3 2.9 L0.6 5.4" fill="none" stroke="#5a5a5a" stroke-width="1"/></svg>
</body></html>
